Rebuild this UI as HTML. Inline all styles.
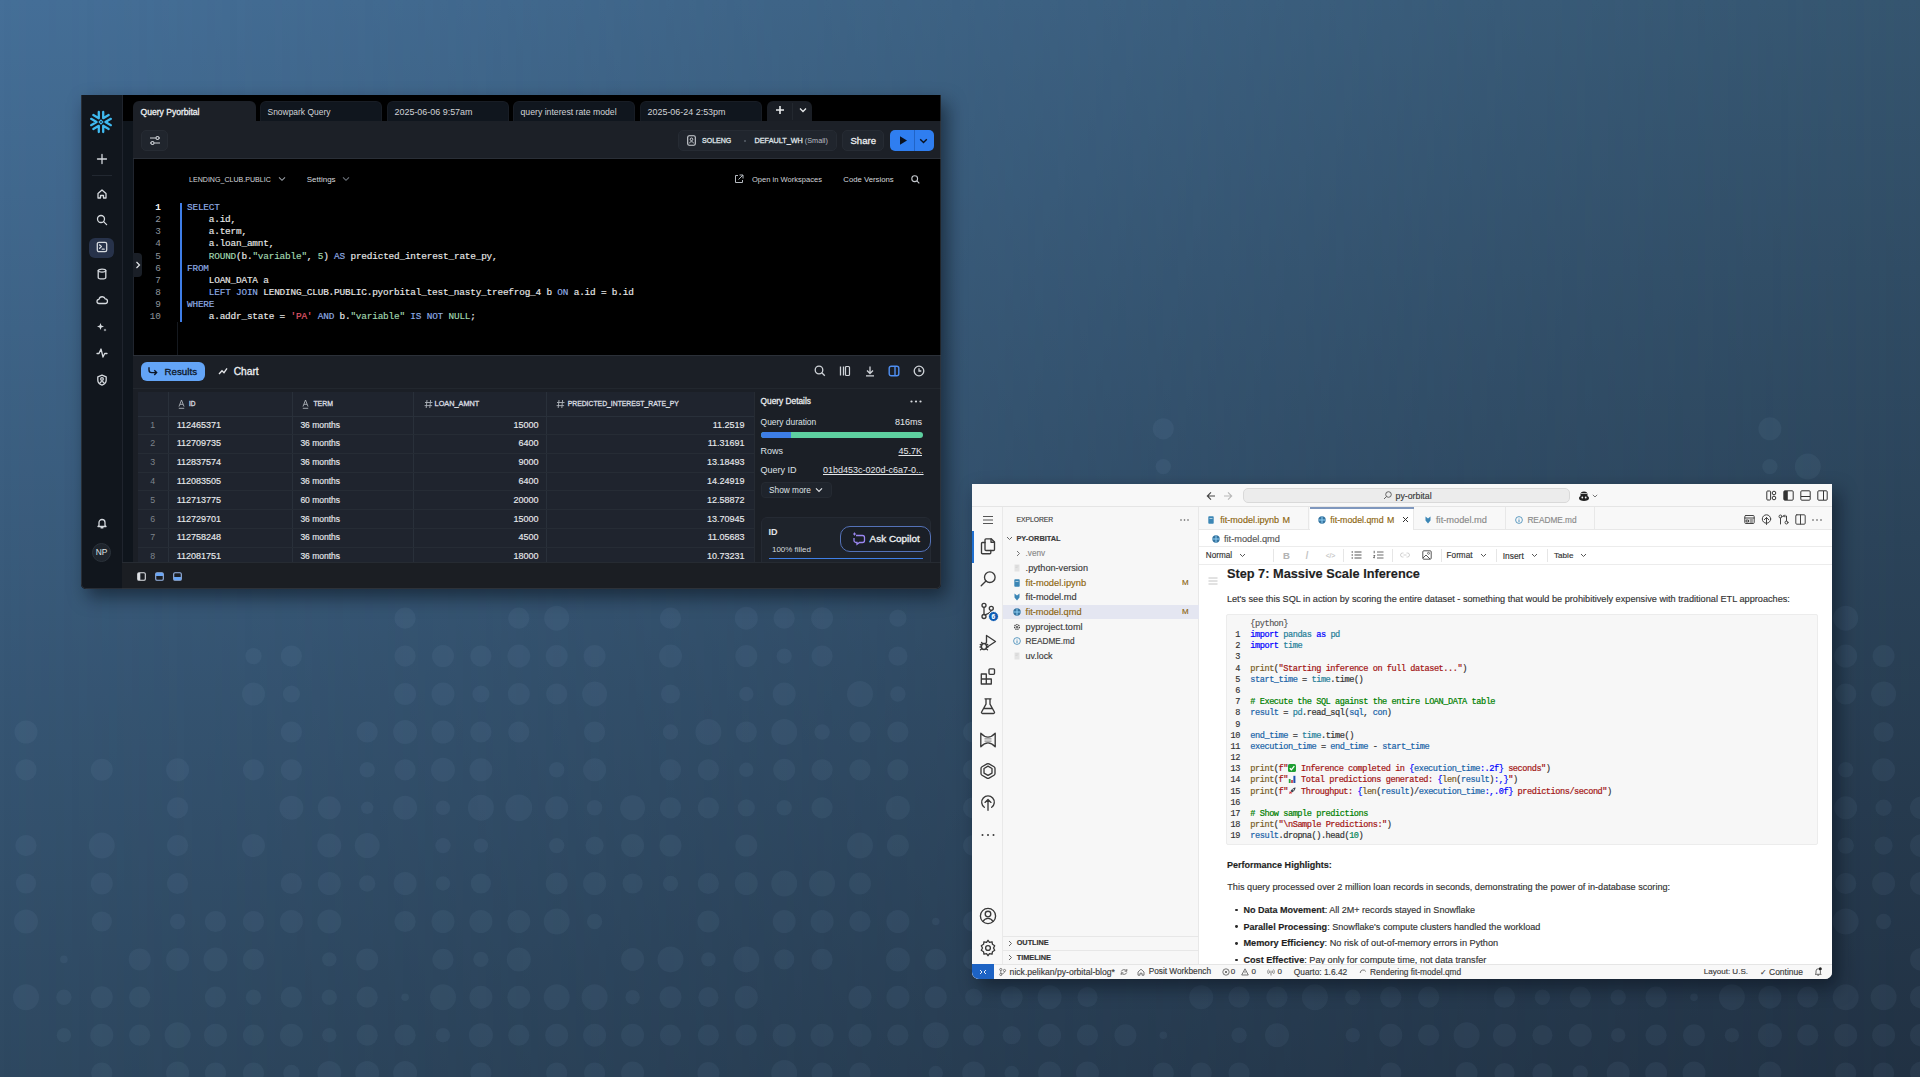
<!DOCTYPE html><html><head><meta charset="utf-8"><style>
*{box-sizing:border-box;margin:0;padding:0}
html,body{width:1920px;height:1077px;overflow:hidden}
body{position:relative;font-family:"Liberation Sans",sans-serif;background:#2e4860}
.t{position:absolute;white-space:nowrap}
.b{position:absolute}
.ic{position:absolute;overflow:visible}
#bgL{position:absolute;left:0;top:0;width:1920px;height:1077px;background:linear-gradient(to bottom,#456f98,#2e4860)}
#bgR{position:absolute;left:0;top:0;width:1920px;height:1077px;background:linear-gradient(to bottom,#35556f,#213143);-webkit-mask-image:linear-gradient(to right,transparent,#000);mask-image:linear-gradient(to right,transparent,#000)}
#dots{position:absolute;left:0;top:0}
.win{position:absolute;overflow:hidden}
#sf{left:81px;top:95px;width:860px;height:494px;background:#000;border-radius:0 0 5px 5px;box-shadow:6px 8px 18px rgba(5,12,22,.55)}
#sfb{position:absolute;left:81px;top:95px;width:860px;height:494px;border-radius:0 0 5px 5px;border:1px solid rgba(60,68,78,.55);border-top:none;pointer-events:none}
#vs{left:972px;top:484px;width:860px;height:495px;background:#f8f8f8;border-radius:0 0 7px 7px;box-shadow:6px 8px 18px rgba(5,12,22,.5)}
.mono{font-family:"Liberation Mono",monospace}
.semi{-webkit-text-stroke:0.3px currentColor}
.semi2{-webkit-text-stroke:0.15px currentColor}
#vs .t{-webkit-text-stroke:0.15px currentColor}
.kw{color:#90aee6}.fn{color:#a3d9b1}.st{color:#e35a6e}
</style></head><body>
<div id="bgL"></div><div id="bgR"></div>
<svg id="dots" width="1920" height="1077"><g fill="rgba(180,220,255,0.055)"><circle cx="1163.3" cy="428.8" r="10.6"/><circle cx="1769.9" cy="428.8" r="11.5"/><circle cx="1163.3" cy="466.6" r="7.7"/><circle cx="1769.9" cy="466.6" r="7.7"/><circle cx="1807.8" cy="466.6" r="13.0"/><circle cx="405.1" cy="618.2" r="10.6"/><circle cx="518.8" cy="618.2" r="10.6"/><circle cx="556.7" cy="618.2" r="12.5"/><circle cx="670.5" cy="618.2" r="10.6"/><circle cx="746.3" cy="618.2" r="11.5"/><circle cx="784.2" cy="618.2" r="10.6"/><circle cx="822.1" cy="618.2" r="11.0"/><circle cx="897.9" cy="618.2" r="8.6"/><circle cx="1845.7" cy="618.2" r="12.5"/><circle cx="253.5" cy="656.1" r="8.2"/><circle cx="291.4" cy="656.1" r="10.6"/><circle cx="405.1" cy="656.1" r="10.6"/><circle cx="443.0" cy="656.1" r="11.0"/><circle cx="480.9" cy="656.1" r="10.6"/><circle cx="518.8" cy="656.1" r="11.5"/><circle cx="556.7" cy="656.1" r="11.0"/><circle cx="594.6" cy="656.1" r="11.0"/><circle cx="670.5" cy="656.1" r="11.5"/><circle cx="746.3" cy="656.1" r="11.0"/><circle cx="784.2" cy="656.1" r="7.7"/><circle cx="822.1" cy="656.1" r="10.6"/><circle cx="897.9" cy="656.1" r="9.6"/><circle cx="1845.7" cy="656.1" r="11.5"/><circle cx="1883.6" cy="656.1" r="11.0"/><circle cx="253.5" cy="694.0" r="11.5"/><circle cx="291.4" cy="694.0" r="8.6"/><circle cx="405.1" cy="694.0" r="11.0"/><circle cx="443.0" cy="694.0" r="11.5"/><circle cx="480.9" cy="694.0" r="8.6"/><circle cx="518.8" cy="694.0" r="11.0"/><circle cx="556.7" cy="694.0" r="10.6"/><circle cx="594.6" cy="694.0" r="12.5"/><circle cx="670.5" cy="694.0" r="9.6"/><circle cx="746.3" cy="694.0" r="7.2"/><circle cx="784.2" cy="694.0" r="11.5"/><circle cx="860.0" cy="694.0" r="13.0"/><circle cx="897.9" cy="694.0" r="7.7"/><circle cx="1845.7" cy="694.0" r="10.6"/><circle cx="1883.6" cy="694.0" r="12.5"/><circle cx="26.0" cy="732.0" r="11.5"/><circle cx="291.4" cy="732.0" r="10.6"/><circle cx="367.2" cy="732.0" r="10.6"/><circle cx="405.1" cy="732.0" r="12.0"/><circle cx="443.0" cy="732.0" r="11.5"/><circle cx="480.9" cy="732.0" r="10.6"/><circle cx="518.8" cy="732.0" r="10.6"/><circle cx="594.6" cy="732.0" r="10.6"/><circle cx="670.5" cy="732.0" r="7.7"/><circle cx="708.4" cy="732.0" r="13.0"/><circle cx="746.3" cy="732.0" r="10.6"/><circle cx="784.2" cy="732.0" r="13.0"/><circle cx="822.1" cy="732.0" r="7.7"/><circle cx="860.0" cy="732.0" r="10.6"/><circle cx="897.9" cy="732.0" r="10.6"/><circle cx="973.7" cy="732.0" r="10.6"/><circle cx="1883.6" cy="732.0" r="10.1"/><circle cx="26.0" cy="769.8" r="10.6"/><circle cx="101.8" cy="769.8" r="11.0"/><circle cx="177.6" cy="769.8" r="11.5"/><circle cx="253.5" cy="769.8" r="10.6"/><circle cx="291.4" cy="769.8" r="10.6"/><circle cx="367.2" cy="769.8" r="7.7"/><circle cx="405.1" cy="769.8" r="10.6"/><circle cx="443.0" cy="769.8" r="12.0"/><circle cx="480.9" cy="769.8" r="11.5"/><circle cx="556.7" cy="769.8" r="7.7"/><circle cx="594.6" cy="769.8" r="11.5"/><circle cx="670.5" cy="769.8" r="10.6"/><circle cx="708.4" cy="769.8" r="10.6"/><circle cx="746.3" cy="769.8" r="7.2"/><circle cx="784.2" cy="769.8" r="11.0"/><circle cx="822.1" cy="769.8" r="10.6"/><circle cx="860.0" cy="769.8" r="10.6"/><circle cx="897.9" cy="769.8" r="10.6"/><circle cx="973.7" cy="769.8" r="10.6"/><circle cx="1845.7" cy="769.8" r="7.7"/><circle cx="1883.6" cy="769.8" r="11.5"/><circle cx="177.6" cy="807.8" r="10.6"/><circle cx="291.4" cy="807.8" r="12.0"/><circle cx="329.3" cy="807.8" r="11.5"/><circle cx="367.2" cy="807.8" r="6.2"/><circle cx="405.1" cy="807.8" r="12.0"/><circle cx="443.0" cy="807.8" r="7.2"/><circle cx="480.9" cy="807.8" r="13.0"/><circle cx="518.8" cy="807.8" r="13.4"/><circle cx="556.7" cy="807.8" r="11.5"/><circle cx="594.6" cy="807.8" r="7.7"/><circle cx="632.6" cy="807.8" r="12.5"/><circle cx="670.5" cy="807.8" r="10.6"/><circle cx="708.4" cy="807.8" r="10.6"/><circle cx="746.3" cy="807.8" r="8.6"/><circle cx="784.2" cy="807.8" r="7.7"/><circle cx="822.1" cy="807.8" r="10.6"/><circle cx="897.9" cy="807.8" r="12.0"/><circle cx="973.7" cy="807.8" r="10.6"/><circle cx="1845.7" cy="807.8" r="11.5"/><circle cx="1883.6" cy="807.8" r="8.2"/><circle cx="1921.5" cy="807.8" r="11.5"/><circle cx="26.0" cy="845.6" r="10.6"/><circle cx="101.8" cy="845.6" r="13.0"/><circle cx="177.6" cy="845.6" r="10.6"/><circle cx="253.5" cy="845.6" r="11.5"/><circle cx="329.3" cy="845.6" r="12.0"/><circle cx="367.2" cy="845.6" r="12.5"/><circle cx="443.0" cy="845.6" r="7.7"/><circle cx="480.9" cy="845.6" r="7.2"/><circle cx="556.7" cy="845.6" r="7.7"/><circle cx="594.6" cy="845.6" r="9.1"/><circle cx="632.6" cy="845.6" r="11.5"/><circle cx="670.5" cy="845.6" r="11.0"/><circle cx="746.3" cy="845.6" r="11.0"/><circle cx="860.0" cy="845.6" r="13.0"/><circle cx="897.9" cy="845.6" r="11.0"/><circle cx="973.7" cy="845.6" r="10.6"/><circle cx="1845.7" cy="845.6" r="8.2"/><circle cx="1883.6" cy="845.6" r="9.1"/><circle cx="1921.5" cy="845.6" r="11.5"/><circle cx="26.0" cy="883.5" r="10.1"/><circle cx="101.8" cy="883.5" r="11.0"/><circle cx="177.6" cy="883.5" r="10.6"/><circle cx="291.4" cy="883.5" r="10.6"/><circle cx="329.3" cy="883.5" r="11.5"/><circle cx="367.2" cy="883.5" r="8.2"/><circle cx="405.1" cy="883.5" r="11.5"/><circle cx="443.0" cy="883.5" r="7.2"/><circle cx="480.9" cy="883.5" r="10.1"/><circle cx="556.7" cy="883.5" r="11.0"/><circle cx="594.6" cy="883.5" r="11.5"/><circle cx="632.6" cy="883.5" r="10.1"/><circle cx="670.5" cy="883.5" r="7.7"/><circle cx="708.4" cy="883.5" r="10.6"/><circle cx="746.3" cy="883.5" r="11.5"/><circle cx="784.2" cy="883.5" r="13.0"/><circle cx="822.1" cy="883.5" r="13.0"/><circle cx="860.0" cy="883.5" r="11.0"/><circle cx="1845.7" cy="883.5" r="10.6"/><circle cx="1883.6" cy="883.5" r="11.5"/><circle cx="1921.5" cy="883.5" r="11.5"/><circle cx="26.0" cy="921.5" r="12.0"/><circle cx="101.8" cy="921.5" r="10.1"/><circle cx="177.6" cy="921.5" r="7.7"/><circle cx="215.5" cy="921.5" r="10.6"/><circle cx="253.5" cy="921.5" r="10.6"/><circle cx="291.4" cy="921.5" r="11.5"/><circle cx="329.3" cy="921.5" r="12.0"/><circle cx="405.1" cy="921.5" r="10.6"/><circle cx="443.0" cy="921.5" r="11.5"/><circle cx="480.9" cy="921.5" r="11.5"/><circle cx="518.8" cy="921.5" r="11.5"/><circle cx="556.7" cy="921.5" r="13.0"/><circle cx="594.6" cy="921.5" r="7.7"/><circle cx="708.4" cy="921.5" r="11.0"/><circle cx="784.2" cy="921.5" r="11.5"/><circle cx="822.1" cy="921.5" r="11.5"/><circle cx="860.0" cy="921.5" r="10.6"/><circle cx="897.9" cy="921.5" r="11.5"/><circle cx="935.8" cy="921.5" r="3.8"/><circle cx="973.7" cy="921.5" r="10.6"/><circle cx="1845.7" cy="921.5" r="13.0"/><circle cx="1883.6" cy="921.5" r="7.7"/><circle cx="63.9" cy="959.4" r="3.8"/><circle cx="139.7" cy="959.4" r="11.0"/><circle cx="177.6" cy="959.4" r="11.5"/><circle cx="215.5" cy="959.4" r="12.0"/><circle cx="253.5" cy="959.4" r="10.6"/><circle cx="329.3" cy="959.4" r="7.2"/><circle cx="367.2" cy="959.4" r="11.0"/><circle cx="443.0" cy="959.4" r="10.6"/><circle cx="480.9" cy="959.4" r="7.7"/><circle cx="518.8" cy="959.4" r="12.0"/><circle cx="632.6" cy="959.4" r="11.5"/><circle cx="670.5" cy="959.4" r="13.0"/><circle cx="708.4" cy="959.4" r="7.2"/><circle cx="746.3" cy="959.4" r="13.0"/><circle cx="784.2" cy="959.4" r="10.1"/><circle cx="822.1" cy="959.4" r="10.6"/><circle cx="897.9" cy="959.4" r="12.0"/><circle cx="935.8" cy="959.4" r="10.6"/><circle cx="973.7" cy="959.4" r="10.6"/><circle cx="1921.5" cy="959.4" r="11.5"/><circle cx="26.0" cy="997.2" r="13.0"/><circle cx="63.9" cy="997.2" r="7.7"/><circle cx="101.8" cy="997.2" r="11.0"/><circle cx="139.7" cy="997.2" r="10.6"/><circle cx="215.5" cy="997.2" r="10.6"/><circle cx="253.5" cy="997.2" r="7.7"/><circle cx="291.4" cy="997.2" r="10.6"/><circle cx="329.3" cy="997.2" r="7.7"/><circle cx="367.2" cy="997.2" r="10.6"/><circle cx="405.1" cy="997.2" r="3.8"/><circle cx="443.0" cy="997.2" r="13.0"/><circle cx="480.9" cy="997.2" r="11.5"/><circle cx="518.8" cy="997.2" r="11.5"/><circle cx="556.7" cy="997.2" r="13.0"/><circle cx="594.6" cy="997.2" r="13.0"/><circle cx="632.6" cy="997.2" r="7.2"/><circle cx="670.5" cy="997.2" r="11.0"/><circle cx="708.4" cy="997.2" r="10.1"/><circle cx="746.3" cy="997.2" r="11.5"/><circle cx="860.0" cy="997.2" r="11.5"/><circle cx="897.9" cy="997.2" r="11.5"/><circle cx="935.8" cy="997.2" r="11.0"/><circle cx="973.7" cy="997.2" r="8.6"/><circle cx="1011.7" cy="997.2" r="11.0"/><circle cx="1049.6" cy="997.2" r="12.0"/><circle cx="1087.5" cy="997.2" r="10.1"/><circle cx="1201.2" cy="997.2" r="12.0"/><circle cx="1239.1" cy="997.2" r="10.6"/><circle cx="1277.0" cy="997.2" r="10.6"/><circle cx="1314.9" cy="997.2" r="13.0"/><circle cx="1352.8" cy="997.2" r="7.7"/><circle cx="1390.8" cy="997.2" r="10.6"/><circle cx="1428.7" cy="997.2" r="10.6"/><circle cx="1504.5" cy="997.2" r="10.6"/><circle cx="1542.4" cy="997.2" r="7.7"/><circle cx="1580.3" cy="997.2" r="10.6"/><circle cx="1618.2" cy="997.2" r="7.7"/><circle cx="1656.1" cy="997.2" r="10.6"/><circle cx="1694.0" cy="997.2" r="3.8"/><circle cx="1731.9" cy="997.2" r="13.0"/><circle cx="1769.9" cy="997.2" r="11.5"/><circle cx="1807.8" cy="997.2" r="10.6"/><circle cx="1845.7" cy="997.2" r="13.0"/><circle cx="1883.6" cy="997.2" r="13.0"/><circle cx="1921.5" cy="997.2" r="11.5"/><circle cx="63.9" cy="1035.2" r="7.2"/><circle cx="101.8" cy="1035.2" r="11.5"/><circle cx="139.7" cy="1035.2" r="10.6"/><circle cx="177.6" cy="1035.2" r="13.0"/><circle cx="215.5" cy="1035.2" r="11.5"/><circle cx="253.5" cy="1035.2" r="10.6"/><circle cx="291.4" cy="1035.2" r="11.5"/><circle cx="329.3" cy="1035.2" r="7.2"/><circle cx="367.2" cy="1035.2" r="10.6"/><circle cx="405.1" cy="1035.2" r="10.6"/><circle cx="443.0" cy="1035.2" r="7.2"/><circle cx="480.9" cy="1035.2" r="12.0"/><circle cx="518.8" cy="1035.2" r="10.6"/><circle cx="556.7" cy="1035.2" r="11.5"/><circle cx="594.6" cy="1035.2" r="11.5"/><circle cx="632.6" cy="1035.2" r="11.5"/><circle cx="670.5" cy="1035.2" r="10.6"/><circle cx="708.4" cy="1035.2" r="10.6"/><circle cx="746.3" cy="1035.2" r="10.6"/><circle cx="784.2" cy="1035.2" r="11.5"/><circle cx="822.1" cy="1035.2" r="11.5"/><circle cx="860.0" cy="1035.2" r="11.5"/><circle cx="897.9" cy="1035.2" r="10.6"/><circle cx="935.8" cy="1035.2" r="13.0"/><circle cx="973.7" cy="1035.2" r="10.6"/><circle cx="1011.7" cy="1035.2" r="9.1"/><circle cx="1049.6" cy="1035.2" r="11.5"/><circle cx="1087.5" cy="1035.2" r="10.6"/><circle cx="1125.4" cy="1035.2" r="11.0"/><circle cx="1163.3" cy="1035.2" r="3.8"/><circle cx="1239.1" cy="1035.2" r="7.7"/><circle cx="1277.0" cy="1035.2" r="12.0"/><circle cx="1352.8" cy="1035.2" r="7.2"/><circle cx="1390.8" cy="1035.2" r="11.5"/><circle cx="1428.7" cy="1035.2" r="10.6"/><circle cx="1466.6" cy="1035.2" r="13.0"/><circle cx="1504.5" cy="1035.2" r="11.5"/><circle cx="1542.4" cy="1035.2" r="10.1"/><circle cx="1580.3" cy="1035.2" r="11.5"/><circle cx="1618.2" cy="1035.2" r="7.2"/><circle cx="1656.1" cy="1035.2" r="10.6"/><circle cx="1694.0" cy="1035.2" r="11.0"/><circle cx="1731.9" cy="1035.2" r="7.2"/><circle cx="1769.9" cy="1035.2" r="12.0"/><circle cx="1807.8" cy="1035.2" r="10.6"/><circle cx="1845.7" cy="1035.2" r="11.5"/><circle cx="1883.6" cy="1035.2" r="11.5"/><circle cx="1921.5" cy="1035.2" r="11.5"/><circle cx="101.8" cy="1073.0" r="10.6"/><circle cx="177.6" cy="1073.0" r="11.5"/><circle cx="215.5" cy="1073.0" r="10.6"/><circle cx="253.5" cy="1073.0" r="10.6"/><circle cx="291.4" cy="1073.0" r="8.2"/><circle cx="329.3" cy="1073.0" r="12.0"/><circle cx="367.2" cy="1073.0" r="12.0"/><circle cx="405.1" cy="1073.0" r="12.0"/><circle cx="480.9" cy="1073.0" r="10.6"/><circle cx="556.7" cy="1073.0" r="10.6"/><circle cx="594.6" cy="1073.0" r="10.6"/><circle cx="632.6" cy="1073.0" r="11.5"/><circle cx="708.4" cy="1073.0" r="11.0"/><circle cx="784.2" cy="1073.0" r="13.0"/><circle cx="822.1" cy="1073.0" r="10.6"/><circle cx="860.0" cy="1073.0" r="10.6"/><circle cx="935.8" cy="1073.0" r="7.2"/><circle cx="973.7" cy="1073.0" r="11.5"/><circle cx="1011.7" cy="1073.0" r="7.2"/><circle cx="1049.6" cy="1073.0" r="11.5"/><circle cx="1087.5" cy="1073.0" r="11.5"/><circle cx="1163.3" cy="1073.0" r="10.6"/><circle cx="1201.2" cy="1073.0" r="10.6"/><circle cx="1239.1" cy="1073.0" r="10.6"/><circle cx="1390.8" cy="1073.0" r="10.6"/><circle cx="1466.6" cy="1073.0" r="11.0"/><circle cx="1504.5" cy="1073.0" r="10.1"/><circle cx="1542.4" cy="1073.0" r="10.1"/><circle cx="1580.3" cy="1073.0" r="7.7"/><circle cx="1618.2" cy="1073.0" r="11.5"/><circle cx="1656.1" cy="1073.0" r="11.0"/><circle cx="1694.0" cy="1073.0" r="11.5"/><circle cx="1769.9" cy="1073.0" r="11.5"/><circle cx="1845.7" cy="1073.0" r="10.6"/><circle cx="1883.6" cy="1073.0" r="10.6"/><circle cx="1921.5" cy="1073.0" r="11.5"/></g></svg>
<div class="win" id="sf">
<div class="b" style="left:0px;top:0px;width:41px;height:494px;background:#11161d"></div>
<div class="b" style="left:41px;top:26px;width:11px;height:468px;background:#0f151c"></div>
<div class="b" style="left:41px;top:0px;width:1.2px;height:467px;background:#1f242d"></div>
<div class="b" style="left:51.5px;top:26px;width:1.5px;height:441px;background:#20252e"></div>
<div class="b" style="left:52px;top:6px;width:123px;height:21px;background:#1c2027;border-radius:6px 6px 0 0;"></div>
<div id="t1" class="t semi" style="left:59.5px;top:11.00px;font-size:8.57px;line-height:12px;color:#eef0f2;font-weight:normal;">Query Pyorbital</div>
<div class="b" style="left:179px;top:6px;width:122px;height:20.5px;background:#10161e;border-radius:6px 6px 0 0;border:1px solid #181d25;border-bottom:none"></div>
<div id="t2" class="t " style="left:186.5px;top:11.00px;font-size:8.46px;line-height:12px;color:#d0d3d7;font-weight:normal;">Snowpark Query</div>
<div class="b" style="left:306px;top:6px;width:122px;height:20.5px;background:#10161e;border-radius:6px 6px 0 0;border:1px solid #181d25;border-bottom:none"></div>
<div id="t3" class="t " style="left:313.5px;top:11.00px;font-size:8.95px;line-height:12px;color:#d0d3d7;font-weight:normal;">2025-06-06 9:57am</div>
<div class="b" style="left:432px;top:6px;width:122px;height:20.5px;background:#10161e;border-radius:6px 6px 0 0;border:1px solid #181d25;border-bottom:none"></div>
<div id="t4" class="t " style="left:439.5px;top:11.00px;font-size:8.70px;line-height:12px;color:#d0d3d7;font-weight:normal;">query interest rate model</div>
<div class="b" style="left:559px;top:6px;width:122px;height:20.5px;background:#10161e;border-radius:6px 6px 0 0;border:1px solid #181d25;border-bottom:none"></div>
<div id="t5" class="t " style="left:566.5px;top:11.00px;font-size:8.95px;line-height:12px;color:#d0d3d7;font-weight:normal;">2025-06-24 2:53pm</div>
<div class="b" style="left:686px;top:6px;width:45px;height:21px;background:#1a1e25;border-radius:6px 6px 0 0"></div>
<div class="b" style="left:711px;top:8px;width:1px;height:17px;background:#23282f"></div>
<svg class="ic" style="left:694px;top:10px;" width="10" height="10" viewBox="0 0 10 10"><path d="M5 1v8M1 5h8" stroke="#e8eaec" stroke-width="1.6" fill="none"/></svg>
<svg class="ic" style="left:718px;top:12px;" width="8" height="6" viewBox="0 0 8 6"><path d="M1 1.5l3 3 3-3" stroke="#e8eaec" stroke-width="1.3" fill="none"/></svg>
<div class="b" style="left:52px;top:26px;width:808px;height:38px;background:#1c2027"></div>
<div class="b" style="left:52px;top:63px;width:808px;height:1px;background:#2a2f37"></div>
<div class="b" style="left:60px;top:35px;width:27px;height:21px;background:#20252d;border-radius:5px;border:1px solid #262b33"></div>
<svg class="ic" style="left:68px;top:40px;" width="12" height="11" viewBox="0 0 12 11"><path d="M1 3h6M10 3h1M1 8h1M5 8h6" stroke="#cfd3d8" stroke-width="1.1" fill="none"/><circle cx="8.5" cy="3" r="1.5" stroke="#cfd3d8" stroke-width="1.1" fill="none"/><circle cx="3.5" cy="8" r="1.5" stroke="#cfd3d8" stroke-width="1.1" fill="none"/></svg>
<div class="b" style="left:597px;top:35px;width:159px;height:21px;background:#20252d;border-radius:5px;border:1px solid #262b33"></div>
<svg class="ic" style="left:606px;top:40px;" width="9" height="11" viewBox="0 0 9 11"><rect x="0.7" y="0.7" width="7.6" height="9.6" rx="1.5" stroke="#cfd3d8" stroke-width="1.1" fill="none"/><circle cx="4.5" cy="4.3" r="1.3" stroke="#cfd3d8" stroke-width="1" fill="none"/><path d="M2.3 8.3c.5-1.2 1.3-1.6 2.2-1.6s1.7.4 2.2 1.6" stroke="#cfd3d8" stroke-width="1" fill="none"/></svg>
<div id="t6" class="t semi" style="left:621px;top:39.50px;font-size:7.04px;line-height:12px;color:#dfe2e6;font-weight:normal;">SOLENG</div>
<div class="b" style="left:662.5px;top:44.5px;width:2px;height:2px;background:#59606a;border-radius:1px"></div>
<div id="t7" class="t semi" style="left:673.5px;top:39.50px;font-size:7.27px;line-height:12px;color:#dfe2e6;font-weight:normal;">DEFAULT_WH <span style="color:#b9bec4;-webkit-text-stroke:0">(Small)</span></div>
<div class="b" style="left:761px;top:35px;width:42px;height:21px;background:#20252d;border-radius:5px;border:1px solid #262b33"></div>
<div id="t8" class="t semi" style="left:769.5px;top:39.50px;font-size:9.56px;line-height:12px;color:#eceef0;font-weight:normal;">Share</div>
<div class="b" style="left:809px;top:35px;width:44px;height:21px;background:#2f7ef0;border-radius:5px"></div>
<div class="b" style="left:833px;top:35px;width:1px;height:21px;background:#2164c6"></div>
<svg class="ic" style="left:817px;top:40px;" width="10" height="11" viewBox="0 0 10 11"><path d="M2 1.2v8.6l7-4.3z" fill="#0b1220"/></svg>
<svg class="ic" style="left:838px;top:43px;" width="9" height="6" viewBox="0 0 9 6"><path d="M1.2 1.2l3.3 3.3 3.3-3.3" stroke="#0b1220" stroke-width="1.4" fill="none"/></svg>
<div id="t9" class="t " style="left:108px;top:79.00px;font-size:7.09px;line-height:12px;color:#d6d9dd;font-weight:normal;">LENDING_CLUB.PUBLIC</div>
<svg class="ic" style="left:197px;top:81px;" width="8" height="6" viewBox="0 0 8 6"><path d="M1 1.3l3 3 3-3" stroke="#9aa0a7" stroke-width="1.1" fill="none"/></svg>
<div id="t10" class="t " style="left:225.7px;top:79.00px;font-size:8.00px;line-height:12px;color:#d6d9dd;font-weight:normal;">Settings</div>
<svg class="ic" style="left:261px;top:81px;" width="8" height="6" viewBox="0 0 8 6"><path d="M1 1.3l3 3 3-3" stroke="#6d737b" stroke-width="1.1" fill="none"/></svg>
<svg class="ic" style="left:653px;top:79px;" width="10" height="10" viewBox="0 0 10 10"><path d="M4 1.5H1.5v7h7V6M5.5 1h3.5v3.5M9 1L4.5 5.5" stroke="#b5bac0" stroke-width="1" fill="none"/></svg>
<div id="t11" class="t " style="left:671px;top:79.00px;font-size:7.56px;line-height:12px;color:#d0d4d8;font-weight:normal;">Open in Workspaces</div>
<div id="t12" class="t " style="left:762.3px;top:79.00px;font-size:7.75px;line-height:12px;color:#d6d9dd;font-weight:normal;">Code Versions</div>
<svg class="ic" style="left:830px;top:80px;" width="9" height="9" viewBox="0 0 9 9"><circle cx="3.7" cy="3.7" r="2.9" stroke="#c5c9ce" stroke-width="1.1" fill="none"/><path d="M5.9 5.9l2.4 2.4" stroke="#c5c9ce" stroke-width="1.1"/></svg>
<div class="b" style="left:99px;top:107.5px;width:2.2px;height:119px;background:#3f7ee8"></div>
<div class="b" style="left:96px;top:226.6px;width:1px;height:33px;background:#15191f"></div>
<div class="t mono" style="left:60px;width:20px;text-align:right;top:107.30px;font-size:9.4px;line-height:12px;color:#f2f2f2;font-weight:bold;">1</div>
<div class="t mono" style="left:106px;top:107.30px;font-size:9.4px;letter-spacing:-0.18px;line-height:12px;color:#e9e9e9;white-space:pre;-webkit-text-stroke:0.15px currentColor"><span class="kw">SELECT</span></div>
<div class="t mono" style="left:60px;width:20px;text-align:right;top:119.36px;font-size:9.4px;line-height:12px;color:#8f959c;">2</div>
<div class="t mono" style="left:106px;top:119.36px;font-size:9.4px;letter-spacing:-0.18px;line-height:12px;color:#e9e9e9;white-space:pre;-webkit-text-stroke:0.15px currentColor">    a.id,</div>
<div class="t mono" style="left:60px;width:20px;text-align:right;top:131.42px;font-size:9.4px;line-height:12px;color:#8f959c;">3</div>
<div class="t mono" style="left:106px;top:131.42px;font-size:9.4px;letter-spacing:-0.18px;line-height:12px;color:#e9e9e9;white-space:pre;-webkit-text-stroke:0.15px currentColor">    a.term,</div>
<div class="t mono" style="left:60px;width:20px;text-align:right;top:143.48px;font-size:9.4px;line-height:12px;color:#8f959c;">4</div>
<div class="t mono" style="left:106px;top:143.48px;font-size:9.4px;letter-spacing:-0.18px;line-height:12px;color:#e9e9e9;white-space:pre;-webkit-text-stroke:0.15px currentColor">    a.loan_amnt,</div>
<div class="t mono" style="left:60px;width:20px;text-align:right;top:155.54px;font-size:9.4px;line-height:12px;color:#8f959c;">5</div>
<div class="t mono" style="left:106px;top:155.54px;font-size:9.4px;letter-spacing:-0.18px;line-height:12px;color:#e9e9e9;white-space:pre;-webkit-text-stroke:0.15px currentColor">    <span class="fn">ROUND</span>(b.<span class="fn">"variable"</span>, <span class="fn">5</span>) <span class="kw">AS</span> predicted_interest_rate_py,</div>
<div class="t mono" style="left:60px;width:20px;text-align:right;top:167.60px;font-size:9.4px;line-height:12px;color:#8f959c;">6</div>
<div class="t mono" style="left:106px;top:167.60px;font-size:9.4px;letter-spacing:-0.18px;line-height:12px;color:#e9e9e9;white-space:pre;-webkit-text-stroke:0.15px currentColor"><span class="kw">FROM</span></div>
<div class="t mono" style="left:60px;width:20px;text-align:right;top:179.66px;font-size:9.4px;line-height:12px;color:#8f959c;">7</div>
<div class="t mono" style="left:106px;top:179.66px;font-size:9.4px;letter-spacing:-0.18px;line-height:12px;color:#e9e9e9;white-space:pre;-webkit-text-stroke:0.15px currentColor">    LOAN_DATA a</div>
<div class="t mono" style="left:60px;width:20px;text-align:right;top:191.72px;font-size:9.4px;line-height:12px;color:#8f959c;">8</div>
<div class="t mono" style="left:106px;top:191.72px;font-size:9.4px;letter-spacing:-0.18px;line-height:12px;color:#e9e9e9;white-space:pre;-webkit-text-stroke:0.15px currentColor">    <span class="kw">LEFT JOIN</span> LENDING_CLUB.PUBLIC.pyorbital_test_nasty_treefrog_4 b <span class="kw">ON</span> a.id = b.id</div>
<div class="t mono" style="left:60px;width:20px;text-align:right;top:203.78px;font-size:9.4px;line-height:12px;color:#8f959c;">9</div>
<div class="t mono" style="left:106px;top:203.78px;font-size:9.4px;letter-spacing:-0.18px;line-height:12px;color:#e9e9e9;white-space:pre;-webkit-text-stroke:0.15px currentColor"><span class="kw">WHERE</span></div>
<div class="t mono" style="left:60px;width:20px;text-align:right;top:215.84px;font-size:9.4px;line-height:12px;color:#8f959c;">10</div>
<div class="t mono" style="left:106px;top:215.84px;font-size:9.4px;letter-spacing:-0.18px;line-height:12px;color:#e9e9e9;white-space:pre;-webkit-text-stroke:0.15px currentColor">    a.addr_state = <span class="st">'PA'</span> <span class="kw">AND</span> b.<span class="fn">"variable"</span> <span class="kw">IS NOT</span> <span class="fn">NULL</span>;</div>
<div class="b" style="left:51.8px;top:157.8px;width:9px;height:24px;background:#1a1f27;border-radius:0 4px 4px 0"></div>
<svg class="ic" style="left:53.5px;top:165.8px;" width="6" height="8" viewBox="0 0 6 8"><path d="M1.5 1l3 3-3 3" stroke="#e2e5e8" stroke-width="1.2" fill="none"/></svg>
<div class="b" style="left:52px;top:260px;width:808px;height:207px;background:#1b1f26"></div>
<div class="b" style="left:52px;top:260px;width:808px;height:1px;background:#2b3038"></div>
<div class="b" style="left:59.75px;top:267.2px;width:64px;height:19px;background:#63a4f6;border-radius:6px"></div>
<svg class="ic" style="left:66px;top:271px;" width="11" height="10" viewBox="0 0 11 10"><path d="M2 1.2v2.8c0 1.6 1 2.6 2.6 2.6H9.5M7.3 4.3l2.3 2.3-2.3 2.3" stroke="#0c1626" stroke-width="1.4" fill="none"/></svg>
<div id="t13" class="t semi" style="left:83.5px;top:270.50px;font-size:9.75px;line-height:12px;color:#0c1626;font-weight:normal;">Results</div>
<svg class="ic" style="left:137px;top:272px;" width="10" height="8" viewBox="0 0 10 8"><path d="M1 7l3-3.3 2 2L9 1.3" stroke="#e6e8eb" stroke-width="1.3" fill="none"/></svg>
<div id="t14" class="t semi" style="left:152.7px;top:270.50px;font-size:10.23px;line-height:12px;color:#eef0f2;font-weight:normal;">Chart</div>
<svg class="ic" style="left:732.5px;top:270.4px;" width="12" height="12" viewBox="0 0 12 12"><circle cx="5" cy="5" r="3.8" stroke="#cfd3d8" stroke-width="1.3" fill="none"/><path d="M7.8 7.8l3 3" stroke="#cfd3d8" stroke-width="1.3"/></svg>
<svg class="ic" style="left:757.7px;top:270.4px;" width="12" height="12" viewBox="0 0 12 12"><path d="M1.5 1.5v9M4.5 1.5v9" stroke="#cfd3d8" stroke-width="1.3"/><rect x="6.5" y="1.5" width="4" height="9" rx="1" stroke="#cfd3d8" stroke-width="1.2" fill="none"/></svg>
<svg class="ic" style="left:782.6px;top:270.4px;" width="12" height="12" viewBox="0 0 12 12"><path d="M6 1.5v6.5M3 5.5L6 8.5 9 5.5M2 10.8h8" stroke="#cfd3d8" stroke-width="1.3" fill="none"/></svg>
<svg class="ic" style="left:806.7px;top:270.4px;" width="12" height="12" viewBox="0 0 12 12"><rect x="1.2" y="1.2" width="9.6" height="9.6" rx="2" stroke="#4f8ff2" stroke-width="1.4" fill="none"/><path d="M7 1.5v9" stroke="#4f8ff2" stroke-width="1.4"/></svg>
<svg class="ic" style="left:831.6px;top:270.4px;" width="12" height="12" viewBox="0 0 12 12"><circle cx="6" cy="6" r="4.8" stroke="#cfd3d8" stroke-width="1.3" fill="none"/><path d="M6 3.3V6h2.3" stroke="#cfd3d8" stroke-width="1.3" fill="none"/></svg>
<div class="b" style="left:52px;top:292.5px;width:808px;height:1px;background:#22272e"></div>
<div class="b" style="left:56.6px;top:297.3px;width:616px;height:170px;background:#1f242e"></div>
<div class="b" style="left:87.0px;top:297.3px;width:1px;height:170px;background:#29303a"></div>
<div class="b" style="left:210.5px;top:297.3px;width:1px;height:170px;background:#29303a"></div>
<div class="b" style="left:331.6px;top:297.3px;width:1px;height:170px;background:#29303a"></div>
<div class="b" style="left:464.8px;top:297.3px;width:1px;height:170px;background:#29303a"></div>
<div class="b" style="left:56.6px;top:321.0px;width:616px;height:1px;background:#29303a"></div>
<svg class="ic" style="left:97.25px;top:304.0px;" width="7" height="10" viewBox="0 0 7 10"><path d="M1 7.5L3.5 1 6 7.5M2 5.3h3M0.8 9.3h5.4" stroke="#aeb3ba" stroke-width="0.9" fill="none"/></svg>
<div id="t15" class="t semi" style="left:107.9px;top:303.00px;font-size:6.50px;line-height:12px;color:#d9dce0;font-weight:normal;">ID</div>
<svg class="ic" style="left:221px;top:304.0px;" width="7" height="10" viewBox="0 0 7 10"><path d="M1 7.5L3.5 1 6 7.5M2 5.3h3M0.8 9.3h5.4" stroke="#aeb3ba" stroke-width="0.9" fill="none"/></svg>
<div id="t16" class="t semi" style="left:232.39999999999998px;top:303.00px;font-size:6.92px;line-height:12px;color:#d9dce0;font-weight:normal;">TERM</div>
<svg class="ic" style="left:342.7px;top:304.0px;" width="9" height="10" viewBox="0 0 9 10"><path d="M3 1L2.2 9M6.6 1L5.8 9M1 3.5h7.5M0.6 6.6h7.5" stroke="#aeb3ba" stroke-width="0.9" fill="none"/></svg>
<div id="t17" class="t semi" style="left:353.6px;top:303.00px;font-size:7.32px;line-height:12px;color:#d9dce0;font-weight:normal;">LOAN_AMNT</div>
<svg class="ic" style="left:474.79999999999995px;top:304.0px;" width="9" height="10" viewBox="0 0 9 10"><path d="M3 1L2.2 9M6.6 1L5.8 9M1 3.5h7.5M0.6 6.6h7.5" stroke="#aeb3ba" stroke-width="0.9" fill="none"/></svg>
<div id="t18" class="t semi" style="left:486.70000000000005px;top:303.00px;font-size:6.82px;line-height:12px;color:#d9dce0;font-weight:normal;">PREDICTED_INTEREST_RATE_PY</div>
<div class="t" style="left:56.6px;width:30px;text-align:center;top:323.70px;font-size:8.8px;line-height:12px;color:#7d838b">1</div>
<div id="t19" class="t semi2" style="left:95.69999999999999px;top:323.70px;font-size:9.00px;line-height:12px;color:#e6e8eb;font-weight:normal;">112465371</div>
<div id="t20" class="t semi2" style="left:219.39999999999998px;top:323.70px;font-size:8.50px;line-height:12px;color:#e6e8eb;font-weight:normal;">36 months</div>
<div class="t semi2" style="right:402.5px;top:323.70px;font-size:9.0px;line-height:12px;color:#e6e8eb">15000</div>
<div class="t semi2" style="right:196.5px;top:323.70px;font-size:9.0px;line-height:12px;color:#e6e8eb">11.2519</div>
<div class="b" style="left:56.6px;top:339.06px;width:616px;height:1px;background:#262c35"></div>
<div class="t" style="left:56.6px;width:30px;text-align:center;top:342.46px;font-size:8.8px;line-height:12px;color:#7d838b">2</div>
<div id="t21" class="t semi2" style="left:95.69999999999999px;top:342.46px;font-size:9.00px;line-height:12px;color:#e6e8eb;font-weight:normal;">112709735</div>
<div id="t22" class="t semi2" style="left:219.39999999999998px;top:342.46px;font-size:8.50px;line-height:12px;color:#e6e8eb;font-weight:normal;">36 months</div>
<div class="t semi2" style="right:402.5px;top:342.46px;font-size:9.0px;line-height:12px;color:#e6e8eb">6400</div>
<div class="t semi2" style="right:196.5px;top:342.46px;font-size:9.0px;line-height:12px;color:#e6e8eb">11.31691</div>
<div class="b" style="left:56.6px;top:357.82px;width:616px;height:1px;background:#262c35"></div>
<div class="t" style="left:56.6px;width:30px;text-align:center;top:361.22px;font-size:8.8px;line-height:12px;color:#7d838b">3</div>
<div id="t23" class="t semi2" style="left:95.69999999999999px;top:361.22px;font-size:9.00px;line-height:12px;color:#e6e8eb;font-weight:normal;">112837574</div>
<div id="t24" class="t semi2" style="left:219.39999999999998px;top:361.22px;font-size:8.50px;line-height:12px;color:#e6e8eb;font-weight:normal;">36 months</div>
<div class="t semi2" style="right:402.5px;top:361.22px;font-size:9.0px;line-height:12px;color:#e6e8eb">9000</div>
<div class="t semi2" style="right:196.5px;top:361.22px;font-size:9.0px;line-height:12px;color:#e6e8eb">13.18493</div>
<div class="b" style="left:56.6px;top:376.58000000000004px;width:616px;height:1px;background:#262c35"></div>
<div class="t" style="left:56.6px;width:30px;text-align:center;top:379.98px;font-size:8.8px;line-height:12px;color:#7d838b">4</div>
<div id="t25" class="t semi2" style="left:95.69999999999999px;top:379.98px;font-size:9.00px;line-height:12px;color:#e6e8eb;font-weight:normal;">112083505</div>
<div id="t26" class="t semi2" style="left:219.39999999999998px;top:379.98px;font-size:8.50px;line-height:12px;color:#e6e8eb;font-weight:normal;">36 months</div>
<div class="t semi2" style="right:402.5px;top:379.98px;font-size:9.0px;line-height:12px;color:#e6e8eb">6400</div>
<div class="t semi2" style="right:196.5px;top:379.98px;font-size:9.0px;line-height:12px;color:#e6e8eb">14.24919</div>
<div class="b" style="left:56.6px;top:395.34000000000003px;width:616px;height:1px;background:#262c35"></div>
<div class="t" style="left:56.6px;width:30px;text-align:center;top:398.74px;font-size:8.8px;line-height:12px;color:#7d838b">5</div>
<div id="t27" class="t semi2" style="left:95.69999999999999px;top:398.74px;font-size:9.00px;line-height:12px;color:#e6e8eb;font-weight:normal;">112713775</div>
<div id="t28" class="t semi2" style="left:219.39999999999998px;top:398.74px;font-size:8.50px;line-height:12px;color:#e6e8eb;font-weight:normal;">60 months</div>
<div class="t semi2" style="right:402.5px;top:398.74px;font-size:9.0px;line-height:12px;color:#e6e8eb">20000</div>
<div class="t semi2" style="right:196.5px;top:398.74px;font-size:9.0px;line-height:12px;color:#e6e8eb">12.58872</div>
<div class="b" style="left:56.6px;top:414.1px;width:616px;height:1px;background:#262c35"></div>
<div class="t" style="left:56.6px;width:30px;text-align:center;top:417.50px;font-size:8.8px;line-height:12px;color:#7d838b">6</div>
<div id="t29" class="t semi2" style="left:95.69999999999999px;top:417.50px;font-size:9.00px;line-height:12px;color:#e6e8eb;font-weight:normal;">112729701</div>
<div id="t30" class="t semi2" style="left:219.39999999999998px;top:417.50px;font-size:8.50px;line-height:12px;color:#e6e8eb;font-weight:normal;">36 months</div>
<div class="t semi2" style="right:402.5px;top:417.50px;font-size:9.0px;line-height:12px;color:#e6e8eb">15000</div>
<div class="t semi2" style="right:196.5px;top:417.50px;font-size:9.0px;line-height:12px;color:#e6e8eb">13.70945</div>
<div class="b" style="left:56.6px;top:432.86px;width:616px;height:1px;background:#262c35"></div>
<div class="t" style="left:56.6px;width:30px;text-align:center;top:436.26px;font-size:8.8px;line-height:12px;color:#7d838b">7</div>
<div id="t31" class="t semi2" style="left:95.69999999999999px;top:436.26px;font-size:9.00px;line-height:12px;color:#e6e8eb;font-weight:normal;">112758248</div>
<div id="t32" class="t semi2" style="left:219.39999999999998px;top:436.26px;font-size:8.50px;line-height:12px;color:#e6e8eb;font-weight:normal;">36 months</div>
<div class="t semi2" style="right:402.5px;top:436.26px;font-size:9.0px;line-height:12px;color:#e6e8eb">4500</div>
<div class="t semi2" style="right:196.5px;top:436.26px;font-size:9.0px;line-height:12px;color:#e6e8eb">11.05683</div>
<div class="b" style="left:56.6px;top:451.62px;width:616px;height:1px;background:#262c35"></div>
<div class="t" style="left:56.6px;width:30px;text-align:center;top:455.02px;font-size:8.8px;line-height:12px;color:#7d838b">8</div>
<div id="t33" class="t semi2" style="left:95.69999999999999px;top:455.02px;font-size:9.00px;line-height:12px;color:#e6e8eb;font-weight:normal;">112081751</div>
<div id="t34" class="t semi2" style="left:219.39999999999998px;top:455.02px;font-size:8.50px;line-height:12px;color:#e6e8eb;font-weight:normal;">36 months</div>
<div class="t semi2" style="right:402.5px;top:455.02px;font-size:9.0px;line-height:12px;color:#e6e8eb">18000</div>
<div class="t semi2" style="right:196.5px;top:455.02px;font-size:9.0px;line-height:12px;color:#e6e8eb">10.73231</div>
<div class="b" style="left:672.5px;top:297.3px;width:1px;height:170px;background:#262b33"></div>
<div id="t35" class="t semi" style="left:679.6px;top:300.20px;font-size:8.32px;line-height:12px;color:#e8eaed;font-weight:normal;">Query Details</div>
<svg class="ic" style="left:829px;top:305px;" width="12" height="3" viewBox="0 0 12 3"><circle cx="1.5" cy="1.5" r="1.1" fill="#d7dade"/><circle cx="6" cy="1.5" r="1.1" fill="#d7dade"/><circle cx="10.5" cy="1.5" r="1.1" fill="#d7dade"/></svg>
<div id="t36" class="t " style="left:679.6px;top:321.00px;font-size:8.41px;line-height:12px;color:#dfe2e6;font-weight:normal;">Query duration</div>
<div id="t37" class="t " style="right:19px;top:321.00px;font-size:9.00px;line-height:12px;color:#e6e8eb;font-weight:normal;">816ms</div>
<div class="b" style="left:679.6px;top:336.8px;width:162.4px;height:5.8px;background:#5dcf9f;border-radius:3px"></div>
<div class="b" style="left:679.6px;top:336.8px;width:30.5px;height:5.8px;background:#3d7ee6;border-radius:3px 0 0 3px"></div>
<div id="t38" class="t " style="left:679.6px;top:350.00px;font-size:9.00px;line-height:12px;color:#dfe2e6;font-weight:normal;">Rows</div>
<div id="t39" class="t " style="right:19px;top:350.00px;font-size:9.00px;line-height:12px;color:#e6e8eb;font-weight:normal;text-decoration:underline">45.7K</div>
<div id="t40" class="t " style="left:679.6px;top:368.70px;font-size:9.00px;line-height:12px;color:#dfe2e6;font-weight:normal;">Query ID</div>
<div id="t41" class="t " style="left:742px;top:368.70px;font-size:9.00px;line-height:12px;color:#e6e8eb;font-weight:normal;text-decoration:underline">01bd453c-020d-c6a7-0...</div>
<div class="b" style="left:679.6px;top:387px;width:71.5px;height:16px;background:#1f242c;border-radius:4px;border:1px solid #252a32"></div>
<div id="t42" class="t " style="left:688px;top:389.00px;font-size:8.29px;line-height:12px;color:#dfe2e6;font-weight:normal;">Show more</div>
<svg class="ic" style="left:734px;top:392px;" width="8" height="6" viewBox="0 0 8 6"><path d="M1 1.3l3 3 3-3" stroke="#dfe2e6" stroke-width="1.2" fill="none"/></svg>
<div class="b" style="left:679.6px;top:421.5px;width:170.5px;height:60px;background:#1e232b;border-radius:6px;border:1px solid #252a33"></div>
<div id="t43" class="t " style="left:687.5px;top:430.50px;font-size:9.00px;line-height:12px;color:#e2e5e8;font-weight:bold;">ID</div>
<div id="t44" class="t " style="left:691px;top:449.00px;font-size:7.98px;line-height:12px;color:#d6d9dd;font-weight:normal;">100% filled</div>
<div class="b" style="left:688px;top:463px;width:153.6px;height:1.4px;background:#3f7fe6"></div>
<div class="b" style="left:759px;top:430.6px;width:91.4px;height:26.2px;background:#1a1f27;border-radius:10px;border:1.3px solid #5472b8"></div>
<svg class="ic" style="left:771px;top:437px;" width="14" height="13" viewBox="0 0 14 13"><path d="M4 3.5h6.5a2 2 0 0 1 2 2v3a2 2 0 0 1-2 2H7.5L5 12.3v-1.8H4a2 2 0 0 1-2-2V6" stroke="#9a86f0" stroke-width="1.3" fill="none"/><path d="M2.5 0.5v3M1 2h3" stroke="#9a86f0" stroke-width="1"/></svg>
<div id="t45" class="t semi" style="left:788.6px;top:437.50px;font-size:9.93px;line-height:12px;color:#eef0f2;font-weight:normal;">Ask Copilot</div>
<div class="b" style="left:41px;top:467px;width:819px;height:27px;background:#1b1e23"></div>
<div class="b" style="left:41px;top:467px;width:819px;height:1px;background:#262b32"></div>
<svg class="ic" style="left:55.7px;top:477.3px;" width="9" height="9" viewBox="0 0 9 9"><rect x="0.7" y="0.7" width="7.6" height="7.6" rx="1.3" stroke="#dfe2e6" stroke-width="1.1" fill="none"/><rect x="1" y="1" width="2.3" height="7" fill="#dfe2e6"/></svg>
<svg class="ic" style="left:73.6px;top:477.3px;" width="9" height="9" viewBox="0 0 9 9"><rect x="0.7" y="0.7" width="7.6" height="7.6" rx="1.3" stroke="#9ab8e8" stroke-width="1.1" fill="none"/><rect x="1" y="1" width="7" height="3" fill="#6aa6f5"/></svg>
<svg class="ic" style="left:92.0px;top:477.3px;" width="9" height="9" viewBox="0 0 9 9"><rect x="0.7" y="0.7" width="7.6" height="7.6" rx="1.3" stroke="#9ab8e8" stroke-width="1.1" fill="none"/><rect x="1" y="5" width="7" height="3" fill="#6aa6f5"/></svg>
<svg class="ic" style="left:9.399999999999999px;top:15.600000000000001px;" width="22" height="22" viewBox="0 0 22 22"><g transform="translate(11 11)"><path d="M9.86 -3.15L4.40 -0.00L9.86 3.15 M2.20 -10.11L2.20 -3.81L7.66 -6.96 M-7.66 -6.96L-2.20 -3.81L-2.20 -10.11 M-9.86 3.15L-4.40 -0.00L-9.86 -3.15 M-2.20 10.11L-2.20 3.81L-7.66 6.96 M7.66 6.96L2.20 3.81L2.20 10.11" stroke="#3fbaf0" stroke-width="2.3" stroke-linecap="round" stroke-linejoin="round" fill="none"/><path d="M0 -1.9L1.9 0 0 1.9 -1.9 0z" stroke="#3fbaf0" stroke-width="1.1" fill="none"/></g></svg>
<svg class="ic" style="left:14.5px;top:57.8px;" width="12" height="12" viewBox="0 0 12 12"><path d="M6 1.5v9M1.5 6h9" stroke="#d5d9de" stroke-width="1.3" fill="none" stroke-linecap="round" stroke-linejoin="round"/></svg>
<div class="b" style="left:11px;top:80px;width:20px;height:1px;background:#222831"></div>
<svg class="ic" style="left:14.5px;top:92.5px;" width="12" height="12" viewBox="0 0 12 12"><path d="M2 5.5L6 2l4 3.5V10H7.5V7.5h-3V10H2z" stroke="#d5d9de" stroke-width="1.3" fill="none" stroke-linecap="round" stroke-linejoin="round"/></svg>
<svg class="ic" style="left:14.5px;top:119.2px;" width="12" height="12" viewBox="0 0 12 12"><circle cx="5" cy="5" r="3.5" stroke="#d5d9de" stroke-width="1.3" fill="none" stroke-linecap="round" stroke-linejoin="round"/><path d="M7.6 7.6l3 3" stroke="#d5d9de" stroke-width="1.3" fill="none" stroke-linecap="round" stroke-linejoin="round"/></svg>
<div class="b" style="left:7.7px;top:142.6px;width:25.6px;height:20.4px;background:#27324a;border-radius:6px"></div>
<svg class="ic" style="left:14.5px;top:145.7px;" width="12" height="12" viewBox="0 0 12 12"><rect x="1.3" y="1.3" width="9.4" height="9.4" rx="1.6" stroke="#d5d9de" stroke-width="1.3" fill="none" stroke-linecap="round" stroke-linejoin="round"/><path d="M3.6 4l1.8 1.6-1.8 1.6M6.2 8.2h2" stroke="#d5d9de" stroke-width="1.3" fill="none" stroke-linecap="round" stroke-linejoin="round"/></svg>
<svg class="ic" style="left:14.5px;top:172.7px;" width="12" height="12" viewBox="0 0 12 12"><ellipse cx="6" cy="2.6" rx="3.8" ry="1.5" stroke="#d5d9de" stroke-width="1.3" fill="none" stroke-linecap="round" stroke-linejoin="round"/><path d="M2.2 2.6v6.8c0 .8 1.7 1.5 3.8 1.5s3.8-.7 3.8-1.5V2.6" stroke="#d5d9de" stroke-width="1.3" fill="none" stroke-linecap="round" stroke-linejoin="round"/></svg>
<svg class="ic" style="left:14.5px;top:198.5px;" width="12" height="12" viewBox="0 0 12 12"><path d="M3.2 9.5h5.8a2.3 2.3 0 0 0 .3-4.6A3.3 3.3 0 0 0 3 5.3a2.1 2.1 0 0 0 .2 4.2z" stroke="#d5d9de" stroke-width="1.3" fill="none" stroke-linecap="round" stroke-linejoin="round"/></svg>
<svg class="ic" style="left:14.5px;top:225.7px;" width="12" height="12" viewBox="0 0 12 12"><path d="M4.5 2l.9 2.6L8 5.5l-2.6.9L4.5 9l-.9-2.6L1 5.5l2.6-.9z" fill="#d5d9de"/><path d="M9 7.5l.4 1.1 1.1.4-1.1.4L9 10.5l-.4-1.1L7.5 9l1.1-.4z" fill="#d5d9de"/></svg>
<svg class="ic" style="left:14.5px;top:252.3px;" width="12" height="12" viewBox="0 0 12 12"><path d="M1 6.5h2l2-4.5 2 8 1.7-3.5H11" stroke="#d5d9de" stroke-width="1.3" fill="none" stroke-linecap="round" stroke-linejoin="round"/></svg>
<svg class="ic" style="left:14.5px;top:278.8px;" width="12" height="12" viewBox="0 0 12 12"><path d="M6 1.2l4.2 1.6v3.3c0 2.6-1.9 4.3-4.2 5-2.3-.7-4.2-2.4-4.2-5V2.8z" stroke="#d5d9de" stroke-width="1.3" fill="none" stroke-linecap="round" stroke-linejoin="round"/><circle cx="6" cy="5" r="1.3" stroke="#d5d9de" stroke-width="1.3" fill="none" stroke-linecap="round" stroke-linejoin="round"/><path d="M3.8 9.2c.5-1.1 1.2-1.6 2.2-1.6s1.7.5 2.2 1.6" stroke="#d5d9de" stroke-width="1.3" fill="none" stroke-linecap="round" stroke-linejoin="round"/></svg>
<svg class="ic" style="left:14.5px;top:422.0px;" width="12" height="12" viewBox="0 0 12 12"><path d="M3 8.5V5.5a3 3 0 0 1 6 0v3l1 1H2z M5 10.8h2" stroke="#d5d9de" stroke-width="1.3" fill="none" stroke-linecap="round" stroke-linejoin="round"/></svg>
<div class="b" style="left:11px;top:447.5px;width:19px;height:19px;background:#1e242c;border-radius:50%;border:1px solid #2b323b"></div>
<div class="t" style="left:11px;top:451px;width:19px;text-align:center;font-size:8.4px;line-height:12px;color:#dfe2e6">NP</div>
</div>
<div id="sfb"></div>
<div class="win" id="vs">
<div class="b" style="left:0px;top:0px;width:860px;height:23.4px;background:#f8f8f8;border-bottom:1px solid #e5e5e5"></div>
<svg class="ic" style="left:234px;top:6.9px;" width="10" height="10" viewBox="0 0 10 10"><path d="M9 5H1.5M5 1.3L1.3 5 5 8.7" stroke="#444" stroke-width="1.1" fill="none"/></svg>
<svg class="ic" style="left:251.39999999999998px;top:6.9px;" width="10" height="10" viewBox="0 0 10 10"><path d="M1 5h7.5M5 1.3L8.7 5 5 8.7" stroke="#b8b8b8" stroke-width="1.1" fill="none"/></svg>
<div class="b" style="left:270.5px;top:4.3px;width:327.7px;height:15.2px;background:#ececec;border:1px solid #d9d9d9;border-radius:5px"></div>
<svg class="ic" style="left:411.3px;top:7.4px;" width="9" height="9" viewBox="0 0 9 9"><circle cx="5.5" cy="3.5" r="2.8" stroke="#555" stroke-width="0.9" fill="none"/><path d="M3.5 5.5L1 8" stroke="#555" stroke-width="0.9"/></svg>
<div id="t46" class="t " style="left:423.6px;top:6.20px;font-size:8.75px;line-height:12px;color:#3b3b3b;font-weight:normal;">py-orbital</div>
<svg class="ic" style="left:606.3px;top:5.9px;" width="12" height="12" viewBox="0 0 12 12"><path d="M2.5 4.5c0-2 1.2-3 3.5-3s3.5 1 3.5 3v1.5c1 .5 1.5 1.3 1.5 2.2 0 1.8-2.3 2.8-5 2.8S1 10 1 8.2c0-.9.5-1.7 1.5-2.2z" fill="#222"/><circle cx="4.3" cy="7.5" r="0.9" fill="#f8f8f8"/><circle cx="7.7" cy="7.5" r="0.9" fill="#f8f8f8"/><path d="M3 3.5h6" stroke="#f8f8f8" stroke-width="0.7"/></svg>
<svg class="ic" style="left:620px;top:9.9px;" width="6" height="4" viewBox="0 0 6 4"><path d="M0.8 0.8L3 3l2.2-2.2" stroke="#555" stroke-width="0.8" fill="none"/></svg>
<svg class="ic" style="left:794.3px;top:6.4px;" width="11" height="11" viewBox="0 0 11 11"><rect x="0.8" y="1" width="3.8" height="9" rx="0.8" stroke="#333" stroke-width="1" fill="none"/><circle cx="8" cy="3" r="1.8" stroke="#333" stroke-width="1" fill="none"/><circle cx="8" cy="8" r="1.8" stroke="#333" stroke-width="1" fill="none"/></svg>
<svg class="ic" style="left:811.2px;top:6.4px;" width="11" height="11" viewBox="0 0 11 11"><rect x="0.8" y="0.8" width="9.4" height="9.4" rx="1" stroke="#333" stroke-width="1" fill="none"/><rect x="1" y="1" width="3.8" height="9" fill="#333"/></svg>
<svg class="ic" style="left:828.1px;top:6.4px;" width="11" height="11" viewBox="0 0 11 11"><rect x="0.8" y="0.8" width="9.4" height="9.4" rx="1" stroke="#333" stroke-width="1" fill="none"/><path d="M1 6.5h9" stroke="#333" stroke-width="1"/></svg>
<svg class="ic" style="left:844.9px;top:6.4px;" width="11" height="11" viewBox="0 0 11 11"><rect x="0.8" y="0.8" width="9.4" height="9.4" rx="1" stroke="#333" stroke-width="1" fill="none"/><path d="M6.5 1v9" stroke="#333" stroke-width="1"/></svg>
<div class="b" style="left:0px;top:23.4px;width:31.4px;height:456.6px;background:#f8f8f8;border-right:1px solid #e9e9e9"></div>
<div class="b" style="left:0px;top:47px;width:1.6px;height:32px;background:#1f6fd0"></div>
<svg class="ic" style="left:7.5px;top:27.6px;" width="16" height="16" viewBox="0 0 16 16"><path d="M3 4.5h10M3 8h10M3 11.5h10" stroke="#555" stroke-width="1.1"/></svg>
<svg class="ic" style="left:6.5px;top:53.4px;" width="18" height="18" viewBox="0 0 18 18"><path d="M7 1.8h5.2l3.3 3.3v7.4a1 1 0 0 1-1 1H7a1 1 0 0 1-1-1V2.8a1 1 0 0 1 1-1z" stroke="#3a3a3a" stroke-width="1.35" fill="none" stroke-linecap="round" stroke-linejoin="round" stroke-width="1.5"/><path d="M12 1.8v3.4h3.4" stroke="#3a3a3a" stroke-width="1.35" fill="none" stroke-linecap="round" stroke-linejoin="round" stroke-width="1.1"/><path d="M6 5.5H3.5a1 1 0 0 0-1 1v9.2a1 1 0 0 0 1 1h7.3a1 1 0 0 0 1-1v-2.2" stroke="#3a3a3a" stroke-width="1.35" fill="none" stroke-linecap="round" stroke-linejoin="round" stroke-width="1.5"/></svg>
<svg class="ic" style="left:6.5px;top:85.6px;" width="18" height="18" viewBox="0 0 18 18"><circle cx="10.8" cy="7.2" r="5.3" stroke="#3a3a3a" stroke-width="1.35" fill="none" stroke-linecap="round" stroke-linejoin="round"/><path d="M7 11L2.2 15.8" stroke="#3a3a3a" stroke-width="1.35" fill="none" stroke-linecap="round" stroke-linejoin="round"/></svg>
<svg class="ic" style="left:6.5px;top:117.7px;" width="18" height="18" viewBox="0 0 18 18"><circle cx="5" cy="3.3" r="2" stroke="#3a3a3a" stroke-width="1.35" fill="none" stroke-linecap="round" stroke-linejoin="round" stroke-width="1.2"/><circle cx="5" cy="14.5" r="2" stroke="#3a3a3a" stroke-width="1.35" fill="none" stroke-linecap="round" stroke-linejoin="round" stroke-width="1.2"/><circle cx="12.3" cy="6.3" r="2" stroke="#3a3a3a" stroke-width="1.35" fill="none" stroke-linecap="round" stroke-linejoin="round" stroke-width="1.2"/><path d="M5 5.3v7.2M12.3 8.3c0 2.6-2.8 3.5-6.3 4.6" stroke="#3a3a3a" stroke-width="1.35" fill="none" stroke-linecap="round" stroke-linejoin="round" stroke-width="1.2"/></svg>
<div class="b" style="left:15.8px;top:127.1px;width:11px;height:11px;background:#0e5cb4;border-radius:50%;border:1.2px solid #f7f7f7"></div>
<div class="t" style="left:15.8px;top:127.1px;width:11px;text-align:center;font-size:6.5px;line-height:11px;color:#fff;font-weight:bold">6</div>
<svg class="ic" style="left:6.5px;top:149.1px;" width="18" height="18" viewBox="0 0 18 18"><path d="M7.5 9V2.5l9 6-9 6" stroke="#3a3a3a" stroke-width="1.35" fill="none" stroke-linecap="round" stroke-linejoin="round" stroke-width="1.3"/><ellipse cx="5" cy="13.5" rx="2.6" ry="3" stroke="#3a3a3a" stroke-width="1.35" fill="none" stroke-linecap="round" stroke-linejoin="round" stroke-width="1.2"/><path d="M1.3 11.5l1.3 1M8.7 11.5l-1.3 1M1 14h1.4M7.6 14H9M1.5 16.8l1.3-1M8.5 16.8l-1.3-1M3.6 10.8l-1-1.3M6.4 10.8l1-1.3" stroke="#3a3a3a" stroke-width="1.35" fill="none" stroke-linecap="round" stroke-linejoin="round" stroke-width="0.9"/></svg>
<svg class="ic" style="left:6.5px;top:182.8px;" width="18" height="18" viewBox="0 0 18 18"><path d="M2.3 7h5v5h-5zM2.3 12h5v5h-5zM7.3 12h5v5h-5z" stroke="#3a3a3a" stroke-width="1.35" fill="none" stroke-linecap="round" stroke-linejoin="round" stroke-width="1.3"/><rect x="10" y="1.8" width="5.5" height="5.5" rx="1" stroke="#3a3a3a" stroke-width="1.35" fill="none" stroke-linecap="round" stroke-linejoin="round" stroke-width="1.3"/></svg>
<svg class="ic" style="left:6.5px;top:213.4px;" width="18" height="18" viewBox="0 0 18 18"><path d="M6 1.8h6M7 1.8v5.3L2.6 15a1 1 0 0 0 .9 1.5h11a1 1 0 0 0 .9-1.5L11 7.1V1.8M5 11.5h8" stroke="#3a3a3a" stroke-width="1.35" fill="none" stroke-linecap="round" stroke-linejoin="round" stroke-width="1.3"/></svg>
<svg class="ic" style="left:6.5px;top:246.8px;" width="18" height="18" viewBox="0 0 18 18"><path d="M1.8 2.2L1.8 15.8Q9 8 16.2 15.8L16.2 2.2Q9 10 1.8 2.2z" stroke="#3a3a3a" stroke-width="1.35" fill="none" stroke-linecap="round" stroke-linejoin="round" stroke-width="1.05"/><path d="M5.5 7.9h7M5.5 10.1h7" stroke="#555" stroke-width="0.75"/></svg>
<svg class="ic" style="left:6.5px;top:278.4px;" width="18" height="18" viewBox="0 0 18 18"><path d="M9 1.6a2 2 0 0 1 1 .27l5 2.9a2 2 0 0 1 1 1.73v5a2 2 0 0 1-1 1.73l-5 2.9a2 2 0 0 1-2 0l-5-2.9a2 2 0 0 1-1-1.73v-5a2 2 0 0 1 1-1.73l5-2.9a2 2 0 0 1 1-.27z" stroke="#3a3a3a" stroke-width="1.35" fill="none" stroke-linecap="round" stroke-linejoin="round" stroke-width="1.35"/><path d="M9 4.2l4 2.3v4.6L9 13.4 5 11.1V6.5z" stroke="#3a3a3a" stroke-width="1.35" fill="none" stroke-linecap="round" stroke-linejoin="round" stroke-width="1.1"/></svg>
<svg class="ic" style="left:6.5px;top:309.0px;" width="18" height="18" viewBox="0 0 18 18"><path d="M5.3 14.3A6.3 6.3 0 1 1 12.7 14.3" stroke="#3a3a3a" stroke-width="1.35" fill="none" stroke-linecap="round" stroke-linejoin="round" stroke-width="1.4"/><path d="M9 17.2V6.5M6 9.4L9 6.5l3 2.9" stroke="#3a3a3a" stroke-width="1.35" fill="none" stroke-linecap="round" stroke-linejoin="round" stroke-width="1.4"/></svg>
<svg class="ic" style="left:6.5px;top:341.6px;" width="18" height="18" viewBox="0 0 18 18"><circle cx="3.5" cy="9" r="1" fill="#3a3a3a"/><circle cx="9" cy="9" r="1" fill="#3a3a3a"/><circle cx="14.5" cy="9" r="1" fill="#3a3a3a"/></svg>
<svg class="ic" style="left:6.5px;top:423.0px;" width="18" height="18" viewBox="0 0 18 18"><circle cx="9" cy="9" r="7.6" stroke="#3a3a3a" stroke-width="1.35" fill="none" stroke-linecap="round" stroke-linejoin="round" stroke-width="1.35"/><circle cx="9" cy="7" r="2.8" stroke="#3a3a3a" stroke-width="1.35" fill="none" stroke-linecap="round" stroke-linejoin="round" stroke-width="1.35"/><path d="M4 14.5c1.1-2.2 2.8-3.2 5-3.2s3.9 1 5 3.2" stroke="#3a3a3a" stroke-width="1.35" fill="none" stroke-linecap="round" stroke-linejoin="round" stroke-width="1.35"/></svg>
<svg class="ic" style="left:6.5px;top:455.0px;" width="18" height="18" viewBox="0 0 18 18"><path d="M9 1.3l1.5 2.1 2.5-.6.5 2.5 2.2 1.4-1.2 2.3 1.2 2.3-2.2 1.4-.5 2.5-2.5-.6L9 16.7l-1.5-2.1-2.5.6-.5-2.5-2.2-1.4L3.5 9 2.3 6.7l2.2-1.4.5-2.5 2.5.6z" stroke="#3a3a3a" stroke-width="1.35" fill="none" stroke-linecap="round" stroke-linejoin="round" stroke-width="1.3"/><circle cx="9" cy="9" r="2.4" stroke="#3a3a3a" stroke-width="1.35" fill="none" stroke-linecap="round" stroke-linejoin="round" stroke-width="1.3"/></svg>
<div class="b" style="left:31.4px;top:23.4px;width:195.4px;height:456.6px;background:#f7f7f7;border-right:1px solid #e8e8e8"></div>
<div id="t47" class="t " style="left:44.4px;top:29.80px;font-size:6.77px;line-height:12px;color:#3f3f3f;font-weight:normal;">EXPLORER</div>
<svg class="ic" style="left:207.6px;top:34.6px;" width="9" height="2" viewBox="0 0 9 2"><circle cx="1" cy="1" r="0.8" fill="#555"/><circle cx="4.5" cy="1" r="0.8" fill="#555"/><circle cx="8" cy="1" r="0.8" fill="#555"/></svg>
<svg class="ic" style="left:34.0px;top:52.2px;" width="7" height="5" viewBox="0 0 7 5"><path d="M1 1l2.5 2.5L6 1" stroke="#555" stroke-width="0.9" fill="none"/></svg>
<div id="t48" class="t " style="left:44.4px;top:48.90px;font-size:7.40px;line-height:12px;color:#3b3b3b;font-weight:bold;">PY-ORBITAL</div>
<div class="b" style="left:31.4px;top:120.6px;width:195.4px;height:14.6px;background:#e4e6f1"></div>
<svg class="ic" style="left:43.5px;top:66.2px;" width="5" height="7" viewBox="0 0 5 7"><path d="M1 1l2.5 2.5L1 6" stroke="#666" stroke-width="0.9" fill="none"/></svg>
<div id="t49" class="t " style="left:53.6px;top:64.00px;font-size:8.16px;line-height:12px;color:#8a8a8a;font-weight:normal;">.venv</div>
<svg class="ic" style="left:42.2px;top:79.8px;" width="6" height="8" viewBox="0 0 6 8"><path d="M0.5 0.5h5v7h-5z" fill="#e3e3e3"/><path d="M1.5 2h3M1.5 3.5h2" stroke="#cfcfcf" stroke-width="0.6"/></svg>
<div id="t50" class="t " style="left:53.6px;top:78.10px;font-size:9.13px;line-height:12px;color:#3b3b3b;font-weight:normal;">.python-version</div>
<svg class="ic" style="left:42.2px;top:95.1px;" width="6" height="8" viewBox="0 0 6 8"><rect x="0.3" y="0.3" width="5.4" height="7.4" rx="0.8" fill="#3b86b5"/><path d="M1.5 2.5h3" stroke="#fff" stroke-width="0.6"/></svg>
<div id="t51" class="t " style="left:53.6px;top:93.40px;font-size:9.30px;line-height:12px;color:#8c6510;font-weight:normal;">fit-model.ipynb</div>
<div id="t52" class="t " style="left:210px;top:93.40px;font-size:8.00px;line-height:12px;color:#8c6510;font-weight:normal;">M</div>
<svg class="ic" style="left:42.2px;top:109px;" width="6" height="8" viewBox="0 0 6 8"><path d="M0.5 0.5l2.5 2 2.5-2v4L3 7.5 0.5 4.5z" fill="#3b86b5"/></svg>
<div id="t53" class="t " style="left:53.6px;top:107.30px;font-size:9.27px;line-height:12px;color:#3b3b3b;font-weight:normal;">fit-model.md</div>
<svg class="ic" style="left:41.2px;top:124px;" width="8" height="8" viewBox="0 0 8 8"><circle cx="4" cy="4" r="3.7" fill="#34739f"/><path d="M4 0.6v6.8M0.6 4h6.8" stroke="#8fd0f5" stroke-width="1"/></svg>
<div id="t54" class="t " style="left:53.6px;top:122.30px;font-size:9.24px;line-height:12px;color:#8c6510;font-weight:normal;">fit-model.qmd</div>
<div id="t55" class="t " style="left:210px;top:122.30px;font-size:8.00px;line-height:12px;color:#8c6510;font-weight:normal;">M</div>
<svg class="ic" style="left:41.2px;top:138.8px;" width="8" height="8" viewBox="0 0 8 8"><circle cx="4" cy="4" r="2.4" stroke="#444" stroke-width="1.3" fill="none" stroke-dasharray="1.2 0.7"/><circle cx="4" cy="4" r="1" fill="#444"/></svg>
<div id="t56" class="t " style="left:53.6px;top:137.10px;font-size:9.16px;line-height:12px;color:#3b3b3b;font-weight:normal;">pyproject.toml</div>
<svg class="ic" style="left:41.2px;top:153.4px;" width="8" height="8" viewBox="0 0 8 8"><circle cx="4" cy="4" r="3.4" stroke="#3b86b5" stroke-width="0.8" fill="none"/><path d="M4 3.4v2.6M4 2.2v.4" stroke="#3b86b5" stroke-width="0.9"/></svg>
<div id="t57" class="t " style="left:53.6px;top:151.70px;font-size:8.24px;line-height:12px;color:#3b3b3b;font-weight:normal;">README.md</div>
<svg class="ic" style="left:42.2px;top:168px;" width="6" height="8" viewBox="0 0 6 8"><path d="M0.5 0.5h5v7h-5z" fill="#e3e3e3"/><path d="M1.5 2h3M1.5 3.5h2" stroke="#cfcfcf" stroke-width="0.6"/></svg>
<div id="t58" class="t " style="left:53.6px;top:166.30px;font-size:8.90px;line-height:12px;color:#3b3b3b;font-weight:normal;">uv.lock</div>
<div class="b" style="left:31.4px;top:451.5px;width:195.4px;height:1px;background:#e7e7e7"></div>
<svg class="ic" style="left:35.5px;top:455.5px;" width="5" height="7" viewBox="0 0 5 7"><path d="M1 1l2.5 2.5L1 6" stroke="#555" stroke-width="0.9" fill="none"/></svg>
<div id="t59" class="t " style="left:44.7px;top:453.20px;font-size:7.30px;line-height:12px;color:#333;font-weight:bold;">OUTLINE</div>
<div class="b" style="left:31.4px;top:466px;width:195.4px;height:1px;background:#e7e7e7"></div>
<svg class="ic" style="left:35.5px;top:470.0px;" width="5" height="7" viewBox="0 0 5 7"><path d="M1 1l2.5 2.5L1 6" stroke="#555" stroke-width="0.9" fill="none"/></svg>
<div id="t60" class="t " style="left:44.7px;top:467.70px;font-size:7.35px;line-height:12px;color:#333;font-weight:bold;">TIMELINE</div>
<div class="b" style="left:226.8px;top:23.4px;width:633.2px;height:23px;background:#f8f8f8;border-bottom:1px solid #e8e8e8"></div>
<div class="b" style="left:226.8px;top:23.4px;width:110.2px;height:23px;background:#f8f8f8;border-right:1px solid #e8e8e8;border-bottom:1px solid #e8e8e8"></div>
<div class="b" style="left:337.7px;top:23.4px;width:104.7px;height:23.5px;background:#ffffff;border-right:1px solid #e8e8e8"></div>
<div class="b" style="left:337.7px;top:23.4px;width:104.7px;height:1.7px;background:#7f97bd"></div>
<div class="b" style="left:442.4px;top:23.4px;width:92px;height:23px;background:#f8f8f8;border-right:1px solid #e8e8e8;border-bottom:1px solid #e8e8e8"></div>
<div class="b" style="left:534.4px;top:23.4px;width:88.6px;height:23px;background:#f8f8f8;border-right:1px solid #e8e8e8;border-bottom:1px solid #e8e8e8"></div>
<svg class="ic" style="left:236px;top:31.700000000000003px;" width="6" height="8" viewBox="0 0 6 8"><rect x="0.3" y="0.3" width="5.4" height="7.4" rx="0.8" fill="#3b86b5"/><path d="M1.5 2.5h3" stroke="#fff" stroke-width="0.6"/></svg>
<div id="t61" class="t " style="left:248.3px;top:30.00px;font-size:9.04px;line-height:12px;color:#8c6510;font-weight:normal;">fit-model.ipynb <span style="margin-left:1px">M</span></div>
<svg class="ic" style="left:346px;top:31.700000000000003px;" width="8" height="8" viewBox="0 0 8 8"><circle cx="4" cy="4" r="3.7" fill="#34739f"/><path d="M4 0.6v6.8M0.6 4h6.8" stroke="#8fd0f5" stroke-width="1"/></svg>
<div id="t62" class="t " style="left:358.3px;top:30.00px;font-size:8.80px;line-height:12px;color:#8c6510;font-weight:normal;">fit-model.qmd <span style="margin-left:1px">M</span></div>
<svg class="ic" style="left:430.0px;top:32.2px;" width="7" height="7" viewBox="0 0 7 7"><path d="M1 1l5 5M6 1L1 6" stroke="#333" stroke-width="1" fill="none"/></svg>
<svg class="ic" style="left:452.7px;top:31.700000000000003px;" width="6" height="8" viewBox="0 0 6 8"><path d="M0.5 0.5l2.5 2 2.5-2v4L3 7.5 0.5 4.5z" fill="#3b86b5"/></svg>
<div id="t63" class="t " style="left:464px;top:30.00px;font-size:9.27px;line-height:12px;color:#8a8a8a;font-weight:normal;">fit-model.md</div>
<svg class="ic" style="left:543px;top:31.700000000000003px;" width="8" height="8" viewBox="0 0 8 8"><circle cx="4" cy="4" r="3.4" stroke="#3b86b5" stroke-width="0.8" fill="none"/><path d="M4 3.4v2.6M4 2.2v.4" stroke="#3b86b5" stroke-width="0.9"/></svg>
<div id="t64" class="t " style="left:555.4px;top:30.00px;font-size:8.29px;line-height:12px;color:#8a8a8a;font-weight:normal;">README.md</div>
<svg class="ic" style="left:772.1px;top:30.200000000000003px;" width="11" height="11" viewBox="0 0 11 11"><rect x="0.8" y="1.5" width="9.4" height="8" rx="1" stroke="#444" stroke-width="1" fill="none" stroke-linecap="round" stroke-linejoin="round"/><path d="M0.8 4h9.4M2.5 6h2v2h-2zM6 6h2.5M6 8h2.5" stroke="#444" stroke-width="1" fill="none" stroke-linecap="round" stroke-linejoin="round" stroke-width="0.8"/></svg>
<svg class="ic" style="left:789.0px;top:30.200000000000003px;" width="11" height="11" viewBox="0 0 11 11"><circle cx="5.5" cy="5" r="4.2" stroke="#444" stroke-width="1" fill="none" stroke-linecap="round" stroke-linejoin="round"/><path d="M5.5 10.5V3.5M3.3 5.7l2.2-2.2 2.2 2.2" stroke="#444" stroke-width="1" fill="none" stroke-linecap="round" stroke-linejoin="round"/></svg>
<svg class="ic" style="left:805.5px;top:30.200000000000003px;" width="11" height="11" viewBox="0 0 11 11"><circle cx="2.5" cy="2.5" r="1.5" stroke="#444" stroke-width="1" fill="none" stroke-linecap="round" stroke-linejoin="round"/><circle cx="8.5" cy="8.5" r="1.5" stroke="#444" stroke-width="1" fill="none" stroke-linecap="round" stroke-linejoin="round"/><path d="M2.5 4v6M8.5 7V2H5.5M6.5 1l-1 1 1 1" stroke="#444" stroke-width="1" fill="none" stroke-linecap="round" stroke-linejoin="round"/></svg>
<svg class="ic" style="left:823.3px;top:30.200000000000003px;" width="11" height="11" viewBox="0 0 11 11"><rect x="0.8" y="0.8" width="9.4" height="9.4" rx="1" stroke="#444" stroke-width="1" fill="none" stroke-linecap="round" stroke-linejoin="round"/><path d="M5.5 1v9" stroke="#444" stroke-width="1" fill="none" stroke-linecap="round" stroke-linejoin="round"/></svg>
<svg class="ic" style="left:840.2px;top:34.7px;" width="10" height="2" viewBox="0 0 10 2"><circle cx="1" cy="1" r="0.8" fill="#444"/><circle cx="5" cy="1" r="0.8" fill="#444"/><circle cx="9" cy="1" r="0.8" fill="#444"/></svg>
<div class="b" style="left:226.8px;top:46.4px;width:633.2px;height:433.6px;background:#ffffff"></div>
<svg class="ic" style="left:240px;top:51px;" width="8" height="8" viewBox="0 0 8 8"><circle cx="4" cy="4" r="3.7" fill="#34739f"/><path d="M4 0.6v6.8M0.6 4h6.8" stroke="#8fd0f5" stroke-width="1"/></svg>
<div id="t65" class="t " style="left:252px;top:49.30px;font-size:9.24px;line-height:12px;color:#555;font-weight:normal;">fit-model.qmd</div>
<div class="b" style="left:226.8px;top:62px;width:633.2px;height:1px;background:#ececec"></div>
<div class="b" style="left:226.8px;top:80.4px;width:633.2px;height:1px;background:#ececec"></div>
<div id="t66" class="t " style="left:233.8px;top:65.50px;font-size:8.13px;line-height:12px;color:#333;font-weight:normal;">Normal</div>
<svg class="ic" style="left:267.3px;top:68.7px;" width="7" height="5" viewBox="0 0 7 5"><path d="M1 1l2.5 2.5L6 1" stroke="#444" stroke-width="0.9" fill="none"/></svg>
<div class="b" style="left:301px;top:64.5px;width:1px;height:13px;background:#e6e6e6"></div>
<div class="b" style="left:371px;top:64.5px;width:1px;height:13px;background:#e6e6e6"></div>
<div class="b" style="left:419.7px;top:64.5px;width:1px;height:13px;background:#e6e6e6"></div>
<div class="b" style="left:468.5px;top:64.5px;width:1px;height:13px;background:#e6e6e6"></div>
<div class="b" style="left:523.6px;top:64.5px;width:1px;height:13px;background:#e6e6e6"></div>
<div class="b" style="left:575px;top:64.5px;width:1px;height:13px;background:#e6e6e6"></div>
<div id="t67" class="t " style="left:311px;top:65.50px;font-size:9.50px;line-height:12px;color:#b3b3b3;font-weight:bold;">B</div>
<div id="t68" class="t " style="left:333.5px;top:65.50px;font-size:10.00px;line-height:12px;color:#c0c0c0;font-weight:normal;font-style:italic;font-family:"Liberation Serif",serif">I</div>
<div id="t69" class="t " style="left:353.8px;top:65.50px;font-size:6.50px;line-height:12px;color:#c5c5c5;font-weight:normal;">&lt;/&gt;</div>
<svg class="ic" style="left:379.1px;top:66.2px;" width="11" height="10" viewBox="0 0 11 10"><path d="M3.5 2h7M3.5 5h7M3.5 8h7" stroke="#444" stroke-width="0.9"/><circle cx="1.2" cy="2" r="0.7" fill="#444"/><circle cx="1.2" cy="5" r="0.7" fill="#444"/><circle cx="1.2" cy="8" r="0.7" fill="#444"/></svg>
<svg class="ic" style="left:400.9px;top:66.2px;" width="11" height="10" viewBox="0 0 11 10"><path d="M4 2h6.5M4 5h6.5M4 8h6.5M1.2 0.8v2.5M0.5 5.5h1.4l-1.4 2.2h1.5" stroke="#444" stroke-width="0.8" fill="none"/></svg>
<svg class="ic" style="left:428px;top:68.2px;" width="10" height="6" viewBox="0 0 10 6"><path d="M3.5 1H2.5a2 2 0 0 0 0 4h1M6.5 1h1a2 2 0 0 1 0 4h-1M3.5 3h3" stroke="#c5c5c5" stroke-width="0.8" fill="none"/></svg>
<svg class="ic" style="left:450px;top:66.2px;" width="10" height="10" viewBox="0 0 10 10"><rect x="0.8" y="0.8" width="8.4" height="8.4" rx="1" stroke="#444" stroke-width="0.9" fill="none"/><circle cx="6.5" cy="3.3" r="1" stroke="#444" stroke-width="0.7" fill="none"/><path d="M1 8l3-3 4 4" stroke="#444" stroke-width="0.9" fill="none"/></svg>
<div id="t70" class="t " style="left:474.6px;top:65.50px;font-size:8.19px;line-height:12px;color:#333;font-weight:normal;">Format</div>
<svg class="ic" style="left:507.5px;top:68.7px;" width="7" height="5" viewBox="0 0 7 5"><path d="M1 1l2.5 2.5L6 1" stroke="#444" stroke-width="0.9" fill="none"/></svg>
<div id="t71" class="t " style="left:530.8px;top:65.50px;font-size:8.37px;line-height:12px;color:#333;font-weight:normal;">Insert</div>
<svg class="ic" style="left:558.5px;top:68.7px;" width="7" height="5" viewBox="0 0 7 5"><path d="M1 1l2.5 2.5L6 1" stroke="#444" stroke-width="0.9" fill="none"/></svg>
<div id="t72" class="t " style="left:582px;top:65.50px;font-size:8.12px;line-height:12px;color:#333;font-weight:normal;">Table</div>
<svg class="ic" style="left:608.3px;top:68.7px;" width="7" height="5" viewBox="0 0 7 5"><path d="M1 1l2.5 2.5L6 1" stroke="#444" stroke-width="0.9" fill="none"/></svg>
<svg class="ic" style="left:236.3px;top:93.1px;" width="10" height="8" viewBox="0 0 10 8"><path d="M0.5 1h9M0.5 4h9M0.5 7h9" stroke="#bdbdbd" stroke-width="0.9"/></svg>
<div id="t73" class="t " style="left:254.9px;top:81.60px;font-size:12.77px;line-height:16px;color:#1f1f1f;font-weight:bold;">Step 7: Massive Scale Inference</div>
<div id="t74" class="t " style="left:254.9px;top:109.00px;font-size:9.16px;line-height:12px;color:#333;font-weight:normal;">Let's see this SQL in action by scoring the entire dataset - something that would be prohibitively expensive with traditional ETL approaches:</div>
<div class="b" style="left:253.8px;top:129.9px;width:592.2px;height:231.1px;background:#f7f7f7;border:1px solid #ececec;border-radius:2px"></div>
<div id="t75" class="t mono" style="left:278.3px;top:134.00px;font-size:8.60px;line-height:12px;color:#555;font-weight:normal;letter-spacing:-0.45px">{python}</div>
<div class="t mono" style="left:243px;width:25px;text-align:right;top:145.00px;font-size:8.6px;letter-spacing:-0.45px;line-height:12px;color:#333">1</div>
<div class="t mono" style="left:278.3px;top:145.00px;font-size:8.6px;letter-spacing:-0.45px;line-height:12px;color:#333;white-space:pre;-webkit-text-stroke:0.2px currentColor"><span style="color:#0000ff">import</span> <span style="color:#267f99">pandas</span> <span style="color:#0000ff">as</span> <span style="color:#267f99">pd</span></div>
<div class="t mono" style="left:243px;width:25px;text-align:right;top:156.19px;font-size:8.6px;letter-spacing:-0.45px;line-height:12px;color:#333">2</div>
<div class="t mono" style="left:278.3px;top:156.19px;font-size:8.6px;letter-spacing:-0.45px;line-height:12px;color:#333;white-space:pre;-webkit-text-stroke:0.2px currentColor"><span style="color:#0000ff">import</span> <span style="color:#267f99">time</span></div>
<div class="t mono" style="left:243px;width:25px;text-align:right;top:167.38px;font-size:8.6px;letter-spacing:-0.45px;line-height:12px;color:#333">3</div>
<div class="t mono" style="left:243px;width:25px;text-align:right;top:178.57px;font-size:8.6px;letter-spacing:-0.45px;line-height:12px;color:#333">4</div>
<div class="t mono" style="left:278.3px;top:178.57px;font-size:8.6px;letter-spacing:-0.45px;line-height:12px;color:#333;white-space:pre;-webkit-text-stroke:0.2px currentColor"><span style="color:#795e26">print</span>(<span style="color:#a31515">"Starting inference on full dataset..."</span>)</div>
<div class="t mono" style="left:243px;width:25px;text-align:right;top:189.76px;font-size:8.6px;letter-spacing:-0.45px;line-height:12px;color:#333">5</div>
<div class="t mono" style="left:278.3px;top:189.76px;font-size:8.6px;letter-spacing:-0.45px;line-height:12px;color:#333;white-space:pre;-webkit-text-stroke:0.2px currentColor"><span style="color:#1a64a8">start_time</span> = <span style="color:#267f99">time</span>.time()</div>
<div class="t mono" style="left:243px;width:25px;text-align:right;top:200.95px;font-size:8.6px;letter-spacing:-0.45px;line-height:12px;color:#333">6</div>
<div class="t mono" style="left:243px;width:25px;text-align:right;top:212.14px;font-size:8.6px;letter-spacing:-0.45px;line-height:12px;color:#333">7</div>
<div class="t mono" style="left:278.3px;top:212.14px;font-size:8.6px;letter-spacing:-0.45px;line-height:12px;color:#333;white-space:pre;-webkit-text-stroke:0.2px currentColor"><span style="color:#008000"># Execute the SQL against the entire LOAN_DATA table</span></div>
<div class="t mono" style="left:243px;width:25px;text-align:right;top:223.33px;font-size:8.6px;letter-spacing:-0.45px;line-height:12px;color:#333">8</div>
<div class="t mono" style="left:278.3px;top:223.33px;font-size:8.6px;letter-spacing:-0.45px;line-height:12px;color:#333;white-space:pre;-webkit-text-stroke:0.2px currentColor"><span style="color:#1a64a8">result</span> = <span style="color:#267f99">pd</span>.read_sql(<span style="color:#1a64a8">sql</span>, <span style="color:#1a64a8">con</span>)</div>
<div class="t mono" style="left:243px;width:25px;text-align:right;top:234.52px;font-size:8.6px;letter-spacing:-0.45px;line-height:12px;color:#333">9</div>
<div class="t mono" style="left:243px;width:25px;text-align:right;top:245.71px;font-size:8.6px;letter-spacing:-0.45px;line-height:12px;color:#333">10</div>
<div class="t mono" style="left:278.3px;top:245.71px;font-size:8.6px;letter-spacing:-0.45px;line-height:12px;color:#333;white-space:pre;-webkit-text-stroke:0.2px currentColor"><span style="color:#1a64a8">end_time</span> = <span style="color:#267f99">time</span>.time()</div>
<div class="t mono" style="left:243px;width:25px;text-align:right;top:256.90px;font-size:8.6px;letter-spacing:-0.45px;line-height:12px;color:#333">11</div>
<div class="t mono" style="left:278.3px;top:256.90px;font-size:8.6px;letter-spacing:-0.45px;line-height:12px;color:#333;white-space:pre;-webkit-text-stroke:0.2px currentColor"><span style="color:#1a64a8">execution_time</span> = <span style="color:#1a64a8">end_time</span> - <span style="color:#1a64a8">start_time</span></div>
<div class="t mono" style="left:243px;width:25px;text-align:right;top:268.09px;font-size:8.6px;letter-spacing:-0.45px;line-height:12px;color:#333">12</div>
<div class="t mono" style="left:243px;width:25px;text-align:right;top:279.28px;font-size:8.6px;letter-spacing:-0.45px;line-height:12px;color:#333">13</div>
<div class="t mono" style="left:278.3px;top:279.28px;font-size:8.6px;letter-spacing:-0.45px;line-height:12px;color:#333;white-space:pre;-webkit-text-stroke:0.2px currentColor"><span style="color:#795e26">print</span>(<span style="color:#a31515">f"</span><svg width="8" height="8" viewBox="0 0 8 8" style="vertical-align:-1px;margin:0 0 0 0.3px"><rect width="8" height="8" rx="1.6" fill="#1f9e33"/><path d="M1.8 4.2l1.6 1.6L6.3 2.2" stroke="#fff" stroke-width="1.3" fill="none"/></svg><span style="color:#a31515"> Inference completed in </span><span style="color:#0000ff">{</span><span style="color:#1a64a8">execution_time</span><span style="color:#0000ff">:.2f</span><span style="color:#0000ff">}</span><span style="color:#a31515"> seconds"</span>)</div>
<div class="t mono" style="left:243px;width:25px;text-align:right;top:290.47px;font-size:8.6px;letter-spacing:-0.45px;line-height:12px;color:#333">14</div>
<div class="t mono" style="left:278.3px;top:290.47px;font-size:8.6px;letter-spacing:-0.45px;line-height:12px;color:#333;white-space:pre;-webkit-text-stroke:0.2px currentColor"><span style="color:#795e26">print</span>(<span style="color:#a31515">f"</span><svg width="8" height="8" viewBox="0 0 8 8" style="vertical-align:-1px;margin:0 0 0 0.3px"><rect x="0.8" y="4" width="1.8" height="4" fill="#2aa53c"/><rect x="3.2" y="5" width="1.6" height="3" fill="#c0303a"/><rect x="5.4" y="0.8" width="2" height="7.2" fill="#1f4fb0"/></svg><span style="color:#a31515"> Total predictions generated: </span><span style="color:#0000ff">{</span><span style="color:#795e26">len</span>(<span style="color:#1a64a8">result</span>)<span style="color:#0000ff">:,</span><span style="color:#0000ff">}</span><span style="color:#a31515">"</span>)</div>
<div class="t mono" style="left:243px;width:25px;text-align:right;top:301.66px;font-size:8.6px;letter-spacing:-0.45px;line-height:12px;color:#333">15</div>
<div class="t mono" style="left:278.3px;top:301.66px;font-size:8.6px;letter-spacing:-0.45px;line-height:12px;color:#333;white-space:pre;-webkit-text-stroke:0.2px currentColor"><span style="color:#795e26">print</span>(<span style="color:#a31515">f"</span><svg width="8" height="8" viewBox="0 0 8 8" style="vertical-align:-1px;margin:0 0 0 0.3px"><path d="M7.6 0.4C5.6 0.6 3.6 2 2.6 4l1.4 1.4C6 4.4 7.4 2.4 7.6 0.4z" fill="#3a3f48"/><circle cx="5.3" cy="2.7" r="0.7" fill="#dfe6ee"/><path d="M2.4 4.4L0.6 5l1.1.3L1 7 2.9 6.2l.3 1.1.6-1.8z" fill="#d8303a"/></svg><span style="color:#a31515"> Throughput: </span><span style="color:#0000ff">{</span><span style="color:#795e26">len</span>(<span style="color:#1a64a8">result</span>)/<span style="color:#1a64a8">execution_time</span><span style="color:#0000ff">:,.0f</span><span style="color:#0000ff">}</span><span style="color:#a31515"> predictions/second"</span>)</div>
<div class="t mono" style="left:243px;width:25px;text-align:right;top:312.85px;font-size:8.6px;letter-spacing:-0.45px;line-height:12px;color:#333">16</div>
<div class="t mono" style="left:243px;width:25px;text-align:right;top:324.04px;font-size:8.6px;letter-spacing:-0.45px;line-height:12px;color:#333">17</div>
<div class="t mono" style="left:278.3px;top:324.04px;font-size:8.6px;letter-spacing:-0.45px;line-height:12px;color:#333;white-space:pre;-webkit-text-stroke:0.2px currentColor"><span style="color:#008000"># Show sample predictions</span></div>
<div class="t mono" style="left:243px;width:25px;text-align:right;top:335.23px;font-size:8.6px;letter-spacing:-0.45px;line-height:12px;color:#333">18</div>
<div class="t mono" style="left:278.3px;top:335.23px;font-size:8.6px;letter-spacing:-0.45px;line-height:12px;color:#333;white-space:pre;-webkit-text-stroke:0.2px currentColor"><span style="color:#795e26">print</span>(<span style="color:#a31515">"\nSample Predictions:"</span>)</div>
<div class="t mono" style="left:243px;width:25px;text-align:right;top:346.42px;font-size:8.6px;letter-spacing:-0.45px;line-height:12px;color:#333">19</div>
<div class="t mono" style="left:278.3px;top:346.42px;font-size:8.6px;letter-spacing:-0.45px;line-height:12px;color:#333;white-space:pre;-webkit-text-stroke:0.2px currentColor"><span style="color:#1a64a8">result</span>.dropna().head(<span style="color:#098658">10</span>)</div>
<div id="t76" class="t " style="left:254.9px;top:374.70px;font-size:9.04px;line-height:12px;color:#1f1f1f;font-weight:bold;">Performance Highlights:</div>
<div id="t77" class="t " style="left:255.3px;top:397.10px;font-size:9.13px;line-height:12px;color:#333;font-weight:normal;">This query processed over 2 million loan records in seconds, demonstrating the power of in-database scoring:</div>
<div class="b" style="left:263.3px;top:424.6px;width:2.8px;height:2.8px;background:#2a2a2a;border-radius:50%"></div>
<div id="t78" class="t " style="left:271.4px;top:420.10px;font-size:9.04px;line-height:12px;color:#333;font-weight:normal;"><b style="color:#1f1f1f">No Data Movement</b>: All 2M+ records stayed in Snowflake</div>
<div class="b" style="left:263.3px;top:441.05px;width:2.8px;height:2.8px;background:#2a2a2a;border-radius:50%"></div>
<div id="t79" class="t " style="left:271.4px;top:436.55px;font-size:9.08px;line-height:12px;color:#333;font-weight:normal;"><b style="color:#1f1f1f">Parallel Processing</b>: Snowflake's compute clusters handled the workload</div>
<div class="b" style="left:263.3px;top:457.90000000000003px;width:2.8px;height:2.8px;background:#2a2a2a;border-radius:50%"></div>
<div id="t80" class="t " style="left:271.4px;top:453.40px;font-size:9.20px;line-height:12px;color:#333;font-weight:normal;"><b style="color:#1f1f1f">Memory Efficiency</b>: No risk of out-of-memory errors in Python</div>
<div class="b" style="left:263.3px;top:474.6px;width:2.8px;height:2.8px;background:#2a2a2a;border-radius:50%"></div>
<div id="t81" class="t " style="left:271.4px;top:470.10px;font-size:9.13px;line-height:12px;color:#333;font-weight:normal;"><b style="color:#1f1f1f">Cost Effective</b>: Pay only for compute time, not data transfer</div>
<div class="b" style="left:0px;top:480px;width:860px;height:15px;background:#f8f8f8;border-top:1px solid #e5e5e5"></div>
<div class="b" style="left:0px;top:480px;width:22px;height:15px;background:#1d63c4"></div>
<svg class="ic" style="left:7px;top:484.5px;" width="8" height="6" viewBox="0 0 8 6"><path d="M1 1l2 2-2 2M7 1L5 3l2 2" stroke="#fff" stroke-width="0.9" fill="none"/></svg>
<svg class="ic" style="left:26.5px;top:483.5px;" width="7" height="8" viewBox="0 0 7 8"><circle cx="1.8" cy="1.5" r="1.1" stroke="#555" stroke-width="0.7" fill="none"/><circle cx="1.8" cy="6.5" r="1.1" stroke="#555" stroke-width="0.7" fill="none"/><circle cx="5.5" cy="2.5" r="1.1" stroke="#555" stroke-width="0.7" fill="none"/><path d="M1.8 2.6v2.8M5.5 3.6c0 1.5-1.5 2-3.3 2.5" stroke="#555" stroke-width="0.7" fill="none"/></svg>
<div id="t82" class="t " style="left:37.6px;top:481.80px;font-size:8.62px;line-height:12px;color:#3b3b3b;font-weight:normal;">nick.pelikan/py-orbital-blog*</div>
<svg class="ic" style="left:147.7px;top:483.5px;" width="8" height="8" viewBox="0 0 8 8"><path d="M6.5 3A3 3 0 0 0 1.2 3.5M1.5 5a3 3 0 0 0 5.3-.5M6.8 1v2.2H4.6M1.2 7V4.8h2.2" stroke="#555" stroke-width="0.8" fill="none"/></svg>
<svg class="ic" style="left:165.3px;top:483.5px;" width="8" height="8" viewBox="0 0 8 8"><path d="M1 4L4 1.2 7 4v3.2H5V5.2H3v2H1z" stroke="#555" stroke-width="0.8" fill="none"/></svg>
<div id="t83" class="t " style="left:176.7px;top:481.80px;font-size:8.27px;line-height:12px;color:#3b3b3b;font-weight:normal;">Posit Workbench</div>
<svg class="ic" style="left:249.8px;top:483.5px;" width="8" height="8" viewBox="0 0 8 8"><circle cx="4" cy="4" r="3.2" stroke="#555" stroke-width="0.8" fill="none"/><path d="M2.8 2.8l2.4 2.4M5.2 2.8L2.8 5.2" stroke="#555" stroke-width="0.8"/></svg>
<div id="t84" class="t " style="left:258.8px;top:481.80px;font-size:8.00px;line-height:12px;color:#3b3b3b;font-weight:normal;">0</div>
<svg class="ic" style="left:268.5px;top:483.5px;" width="8" height="8" viewBox="0 0 8 8"><path d="M4 0.8L7.3 7H0.7z" stroke="#555" stroke-width="0.8" fill="none"/><path d="M4 3v2M4 5.8v.4" stroke="#555" stroke-width="0.7"/></svg>
<div id="t85" class="t " style="left:279.5px;top:481.80px;font-size:8.00px;line-height:12px;color:#3b3b3b;font-weight:normal;">0</div>
<svg class="ic" style="left:295px;top:483.5px;" width="8" height="8" viewBox="0 0 8 8"><path d="M4 7.5V3M1.5 1.5c-1 1.5-1 3 0 4.5M6.5 1.5c1 1.5 1 3 0 4.5M2.8 2.5c-.5.8-.5 1.7 0 2.5M5.2 2.5c.5.8.5 1.7 0 2.5" stroke="#555" stroke-width="0.7" fill="none"/></svg>
<div id="t86" class="t " style="left:305.5px;top:481.80px;font-size:8.00px;line-height:12px;color:#3b3b3b;font-weight:normal;">0</div>
<div id="t87" class="t " style="left:321.75px;top:481.80px;font-size:8.37px;line-height:12px;color:#3b3b3b;font-weight:normal;">Quarto: 1.6.42</div>
<svg class="ic" style="left:386.5px;top:483.5px;" width="8" height="8" viewBox="0 0 8 8"><path d="M1.2 5A3 3 0 0 1 6.8 3.5" stroke="#555" stroke-width="0.8" fill="none"/></svg>
<div id="t88" class="t " style="left:398px;top:481.80px;font-size:8.33px;line-height:12px;color:#3b3b3b;font-weight:normal;">Rendering fit-model.qmd</div>
<div id="t89" class="t " style="left:731.8px;top:481.80px;font-size:8.04px;line-height:12px;color:#3b3b3b;font-weight:normal;">Layout: U.S.</div>
<div id="t90" class="t " style="left:787.7px;top:481.80px;font-size:8.48px;line-height:12px;color:#3b3b3b;font-weight:normal;">&#10003; Continue</div>
<svg class="ic" style="left:842px;top:483.0px;" width="8" height="9" viewBox="0 0 8 9"><path d="M2 6.5V4a2.2 2.2 0 0 1 4.4 0v2.5l.8.8H1.2zM3.3 8.2h1.8" stroke="#444" stroke-width="0.8" fill="none"/><circle cx="6.3" cy="1.8" r="1.5" fill="#222"/></svg>
</div>
</body></html>
